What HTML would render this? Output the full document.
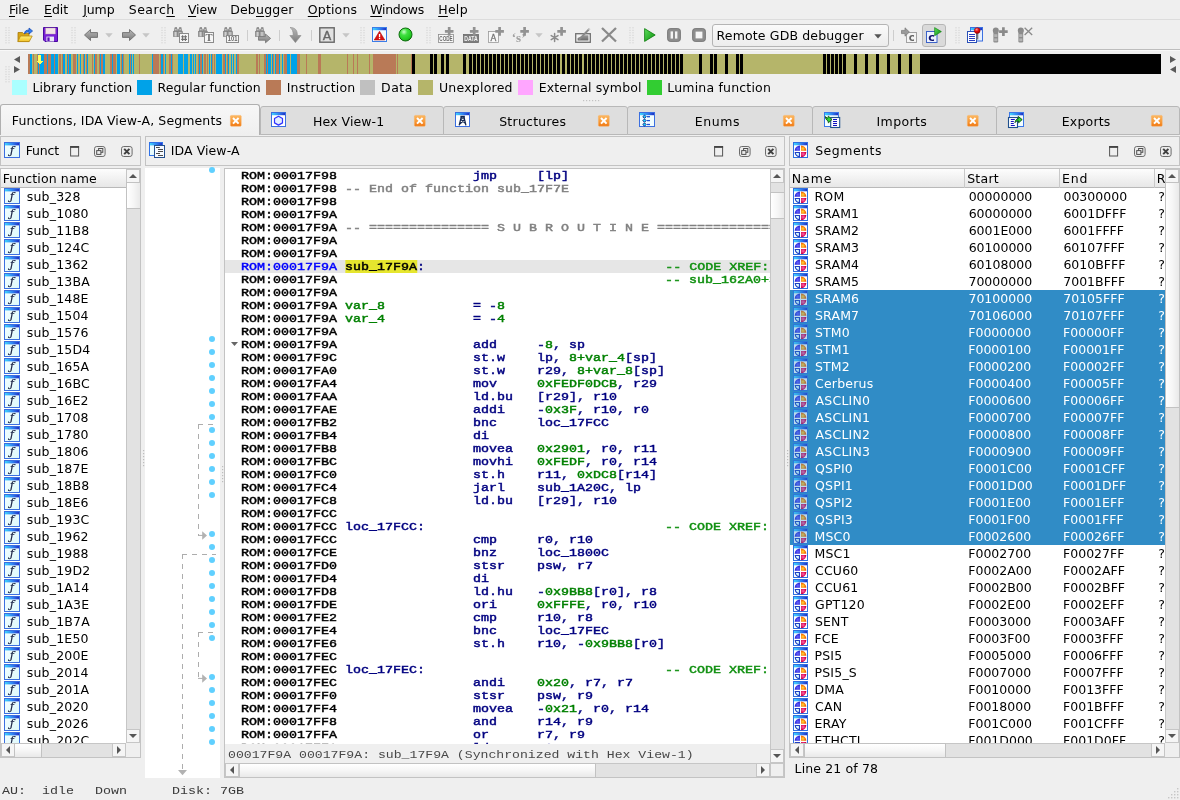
<!DOCTYPE html><html><head><meta charset="utf-8"><title>IDA</title><style>
*{box-sizing:border-box;margin:0;padding:0}
html,body{width:1180px;height:800px;overflow:hidden;background:#efefef}
body{position:relative;font-family:"DejaVu Sans","Liberation Sans",sans-serif;font-size:12.5px;color:#000}
.a{position:absolute}
svg{overflow:visible}
.t{position:absolute;white-space:pre;line-height:16px;height:16px}
.m{font-family:"Liberation Mono","DejaVu Sans Mono",monospace}
u{text-decoration:underline;text-underline-offset:1.5px;text-decoration-thickness:1px}
.code{position:absolute;left:225px;top:169px;width:545px;height:576px;background:#fff;overflow:hidden}
.cs{position:absolute;left:16px;top:-0.5px;width:600px;height:600px;transform-origin:0 0;transform:scaleX(1.15942)}
.ln{position:absolute;left:0;height:13px;line-height:13px;white-space:pre;font-family:"Liberation Mono","DejaVu Sans Mono",monospace;font-weight:normal;-webkit-text-stroke:0.45px currentColor;font-size:11.5px;color:#000}
.n{color:#000080}.g{color:#008000}.c{color:#808080}.x{color:#109010}.b{color:#0000ff}
.row{position:absolute;left:0;height:17px;line-height:17px;white-space:pre}
.sel{background:#308cc6}
.hdr{position:absolute;background:linear-gradient(#fdfdfd,#f3f3f3 45%,#e7e7e7);border-bottom:1px solid #b9b9b9}
.sb{position:absolute;background:#e2e2e2}
.sbb{position:absolute;background:#f5f5f5;border:1px solid #c6c6c6}
.thv{position:absolute;background:linear-gradient(90deg,#fff,#f6f6f6 50%,#e9e9e9);border:1px solid #c2c2c2;border-right:none}
.thh{position:absolute;background:linear-gradient(#fff,#f6f6f6 50%,#e9e9e9);border:1px solid #c2c2c2;border-bottom:none}
.box{position:absolute;border:1px solid #c3c3c3}
</style></head><body>
<svg width="0" height="0" style="position:absolute"><defs>
<linearGradient id="gGrey" x1="0" y1="0" x2="0" y2="1"><stop offset="0" stop-color="#9a9a9a"/><stop offset="1" stop-color="#6a6a6a"/></linearGradient>
<linearGradient id="gGreyL" x1="0" y1="0" x2="0" y2="1"><stop offset="0" stop-color="#b8b8b8"/><stop offset="1" stop-color="#7c7c7c"/></linearGradient>
<linearGradient id="gOr" x1="0" y1="0" x2="0" y2="1"><stop offset="0" stop-color="#fcb862"/><stop offset="0.55" stop-color="#f89a38"/><stop offset="1" stop-color="#f07610"/></linearGradient>
<linearGradient id="gBlueBar" x1="0" y1="0" x2="1" y2="0"><stop offset="0" stop-color="#40d4ff"/><stop offset="0.55" stop-color="#2f80f0"/><stop offset="1" stop-color="#2030c4"/></linearGradient>
<linearGradient id="gCy" x1="0" y1="0" x2="1" y2="1"><stop offset="0" stop-color="#f4feff"/><stop offset="1" stop-color="#dcf9fb"/></linearGradient>
<linearGradient id="gFold" x1="0" y1="0" x2="0" y2="1"><stop offset="0" stop-color="#fff07a"/><stop offset="1" stop-color="#f2c228"/></linearGradient>
<radialGradient id="gBall" cx="0.38" cy="0.3" r="0.75"><stop offset="0" stop-color="#c8ffc8"/><stop offset="0.35" stop-color="#40e040"/><stop offset="0.8" stop-color="#20c820"/><stop offset="1" stop-color="#109010"/></radialGradient>
<radialGradient id="gRed" cx="0.4" cy="0.3" r="0.7"><stop offset="0" stop-color="#ff9a9a"/><stop offset="0.5" stop-color="#e81010"/><stop offset="1" stop-color="#a00000"/></radialGradient>
<linearGradient id="gPlay" x1="0" y1="0" x2="1" y2="1"><stop offset="0" stop-color="#5ee05e"/><stop offset="1" stop-color="#0a8c0a"/></linearGradient>
<radialGradient id="gqB" cx="0.6" cy="0.6" r="0.7"><stop offset="0" stop-color="#6a62ff"/><stop offset="1" stop-color="#1414c8"/></radialGradient>
<radialGradient id="gqO" cx="0.35" cy="0.6" r="0.7"><stop offset="0" stop-color="#ffdc40"/><stop offset="0.6" stop-color="#f87800"/><stop offset="1" stop-color="#e85000"/></radialGradient>
<radialGradient id="gqR" cx="0.4" cy="0.4" r="0.7"><stop offset="0" stop-color="#f66aa8"/><stop offset="0.7" stop-color="#d80050"/><stop offset="1" stop-color="#b00030"/></radialGradient>
<linearGradient id="gTube" x1="0" y1="0" x2="1" y2="0"><stop offset="0" stop-color="#8a8a8a"/><stop offset="0.45" stop-color="#cfcfcf"/><stop offset="1" stop-color="#8e8e8e"/></linearGradient>
<linearGradient id="gHdr" x1="0" y1="0" x2="0" y2="1"><stop offset="0" stop-color="#fcfcfc"/><stop offset="1" stop-color="#e6e6e6"/></linearGradient>
</defs></svg>
<div id="root" style="position:absolute;left:0;top:0;width:1180px;height:800px;will-change:transform">
<div class="a" style="left:0;top:19px;width:1180px;height:1px;background:#dcdcdc"></div>
<div class="t" style="left:8.97px;top:1.67px;letter-spacing:-0.211px;"><u>F</u>ile</div>
<div class="t" style="left:44.07px;top:1.67px;letter-spacing:-0.027px;"><u>E</u>dit</div>
<div class="t" style="left:83.25px;top:1.67px;letter-spacing:-0.128px;"><u>J</u>ump</div>
<div class="t" style="left:128.68px;top:1.67px;letter-spacing:0.533px;">Searc<u>h</u></div>
<div class="t" style="left:188.00px;top:1.67px;letter-spacing:-0.172px;"><u>V</u>iew</div>
<div class="t" style="left:230.17px;top:1.67px;letter-spacing:0.194px;">Deb<u>u</u>gger</div>
<div class="t" style="left:307.80px;top:1.67px;letter-spacing:0.164px;"><u>O</u>ptions</div>
<div class="t" style="left:370.28px;top:1.67px;letter-spacing:-0.308px;"><u>W</u>indows</div>
<div class="t" style="left:438.17px;top:1.67px;letter-spacing:0.304px;"><u>H</u>elp</div>
<div class="a" style="left:0;top:49px;width:1180px;height:1px;background:#bdbdbd"></div>
<div class="a" style="left:0;top:50px;width:1180px;height:1px;background:#f8f8f8"></div>
<svg class="a" style="left:4.5px;top:27px" width="5" height="17" viewBox="0 0 5 17"><rect x="0.5" y="0.3" width="1" height="1" fill="#cbcbcb"/><rect x="0.5" y="2.8" width="1" height="1" fill="#cbcbcb"/><rect x="0.5" y="5.3" width="1" height="1" fill="#cbcbcb"/><rect x="0.5" y="7.8" width="1" height="1" fill="#cbcbcb"/><rect x="0.5" y="10.3" width="1" height="1" fill="#cbcbcb"/><rect x="0.5" y="12.8" width="1" height="1" fill="#cbcbcb"/><rect x="0.5" y="15.3" width="1" height="1" fill="#cbcbcb"/><rect x="3.5" y="0.3" width="1" height="1" fill="#cbcbcb"/><rect x="3.5" y="2.8" width="1" height="1" fill="#cbcbcb"/><rect x="3.5" y="5.3" width="1" height="1" fill="#cbcbcb"/><rect x="3.5" y="7.8" width="1" height="1" fill="#cbcbcb"/><rect x="3.5" y="10.3" width="1" height="1" fill="#cbcbcb"/><rect x="3.5" y="12.8" width="1" height="1" fill="#cbcbcb"/><rect x="3.5" y="15.3" width="1" height="1" fill="#cbcbcb"/></svg>
<svg class="a" style="left:17px;top:27px" width="16" height="16" viewBox="0 0 16 16"><path d="M1 5.5 L1 14.5 L12 14.5 L12 6.5 L6.5 6.5 L5.5 5.5 Z" fill="#d9a514" stroke="#a67808" stroke-width="0.8"/><path d="M3.5 9 L15.2 9 L12.2 14.6 L0.8 14.6 Z" fill="url(#gFold)" stroke="#b88a10" stroke-width="0.8"/><path d="M7.5 6.8 C7.5 3.8 9.5 3 12 3 L12 1 L15.6 4 L12 7 L12 5 C10.2 5 9 5.4 7.5 6.8 Z" fill="#2f7df0" stroke="#1546b0" stroke-width="0.7"/></svg>
<svg class="a" style="left:43px;top:27px" width="15" height="15" viewBox="0 0 15 15"><path d="M0.5 0.5 H14.5 V14.5 H2 L0.5 13 Z" fill="#7a22d6" stroke="#4a0aa0" stroke-width="1"/><rect x="2.6" y="1" width="9.8" height="6" fill="#f3e3e6" stroke="#b9a" stroke-width="0.4"/><rect x="3.4" y="9.6" width="7.6" height="4.9" fill="#e8e8f4"/><rect x="4.4" y="10.4" width="2.2" height="3.6" fill="#5a10b8"/></svg>
<svg class="a" style="left:71px;top:27px" width="5" height="17" viewBox="0 0 5 17"><rect x="0.5" y="0.3" width="1" height="1" fill="#cbcbcb"/><rect x="0.5" y="2.8" width="1" height="1" fill="#cbcbcb"/><rect x="0.5" y="5.3" width="1" height="1" fill="#cbcbcb"/><rect x="0.5" y="7.8" width="1" height="1" fill="#cbcbcb"/><rect x="0.5" y="10.3" width="1" height="1" fill="#cbcbcb"/><rect x="0.5" y="12.8" width="1" height="1" fill="#cbcbcb"/><rect x="0.5" y="15.3" width="1" height="1" fill="#cbcbcb"/><rect x="3.5" y="0.3" width="1" height="1" fill="#cbcbcb"/><rect x="3.5" y="2.8" width="1" height="1" fill="#cbcbcb"/><rect x="3.5" y="5.3" width="1" height="1" fill="#cbcbcb"/><rect x="3.5" y="7.8" width="1" height="1" fill="#cbcbcb"/><rect x="3.5" y="10.3" width="1" height="1" fill="#cbcbcb"/><rect x="3.5" y="12.8" width="1" height="1" fill="#cbcbcb"/><rect x="3.5" y="15.3" width="1" height="1" fill="#cbcbcb"/></svg>
<svg class="a" style="left:83.5px;top:29px" width="14" height="12" viewBox="0 0 14 12"><path d="M0.5 6 L6.5 0.5 L6.5 3.6 L13.5 3.6 L13.5 8.4 L6.5 8.4 L6.5 11.5 Z" fill="url(#gGreyL)" stroke="#6e6e6e" stroke-width="0.9"/></svg>
<svg class="a" style="left:105px;top:33px" width="8" height="5" viewBox="0 0 8 5"><path d="M0.3 0.3 L7.7 0.3 L4 4.6 Z" fill="#c6c6c6"/></svg>
<svg class="a" style="left:121.5px;top:29px" width="14" height="12" viewBox="0 0 14 12"><path d="M13.5 6 L7.5 0.5 L7.5 3.6 L0.5 3.6 L0.5 8.4 L7.5 8.4 L7.5 11.5 Z" fill="url(#gGreyL)" stroke="#6e6e6e" stroke-width="0.9"/></svg>
<svg class="a" style="left:142px;top:33px" width="8" height="5" viewBox="0 0 8 5"><path d="M0.3 0.3 L7.7 0.3 L4 4.6 Z" fill="#c6c6c6"/></svg>
<svg class="a" style="left:161px;top:27px" width="5" height="17" viewBox="0 0 5 17"><rect x="0.5" y="0.3" width="1" height="1" fill="#cbcbcb"/><rect x="0.5" y="2.8" width="1" height="1" fill="#cbcbcb"/><rect x="0.5" y="5.3" width="1" height="1" fill="#cbcbcb"/><rect x="0.5" y="7.8" width="1" height="1" fill="#cbcbcb"/><rect x="0.5" y="10.3" width="1" height="1" fill="#cbcbcb"/><rect x="0.5" y="12.8" width="1" height="1" fill="#cbcbcb"/><rect x="0.5" y="15.3" width="1" height="1" fill="#cbcbcb"/><rect x="3.5" y="0.3" width="1" height="1" fill="#cbcbcb"/><rect x="3.5" y="2.8" width="1" height="1" fill="#cbcbcb"/><rect x="3.5" y="5.3" width="1" height="1" fill="#cbcbcb"/><rect x="3.5" y="7.8" width="1" height="1" fill="#cbcbcb"/><rect x="3.5" y="10.3" width="1" height="1" fill="#cbcbcb"/><rect x="3.5" y="12.8" width="1" height="1" fill="#cbcbcb"/><rect x="3.5" y="15.3" width="1" height="1" fill="#cbcbcb"/></svg>
<svg class="a" style="left:173px;top:27px" width="16" height="16" viewBox="0 0 16 16"><rect x="1.7" y="0.3" width="2.3" height="1.6" fill="#767676"/><rect x="1.4" y="1.8" width="2.9" height="2" fill="url(#gTube)" stroke="#8a8a8a" stroke-width="0.4"/><rect x="0.9" y="3.7" width="3.9" height="1.1" fill="#6e6e6e"/><rect x="0.3" y="4.7" width="4.9" height="5" fill="url(#gTube)" stroke="#7c7c7c" stroke-width="0.5"/><rect x="6.1000000000000005" y="0.3" width="2.3" height="1.6" fill="#767676"/><rect x="5.800000000000001" y="1.8" width="2.9" height="2" fill="url(#gTube)" stroke="#8a8a8a" stroke-width="0.4"/><rect x="5.300000000000001" y="3.7" width="3.9" height="1.1" fill="#6e6e6e"/><rect x="4.7" y="4.7" width="4.9" height="5" fill="url(#gTube)" stroke="#7c7c7c" stroke-width="0.5"/><rect x="4.6" y="2.4" width="1.6" height="2" fill="#8a8a8a"/><rect x="6.5" y="6.5" width="9" height="9" fill="#f6f6f6" stroke="#8a8a8a"/><path d="M9.6 8.2V14 M12.4 8.2V14 M8.2 9.8H14 M8.2 12.4H14" stroke="#6e6e6e" stroke-width="1.1"/></svg>
<svg class="a" style="left:198px;top:27px" width="16" height="16" viewBox="0 0 16 16"><rect x="1.7" y="0.3" width="2.3" height="1.6" fill="#767676"/><rect x="1.4" y="1.8" width="2.9" height="2" fill="url(#gTube)" stroke="#8a8a8a" stroke-width="0.4"/><rect x="0.9" y="3.7" width="3.9" height="1.1" fill="#6e6e6e"/><rect x="0.3" y="4.7" width="4.9" height="5" fill="url(#gTube)" stroke="#7c7c7c" stroke-width="0.5"/><rect x="6.1000000000000005" y="0.3" width="2.3" height="1.6" fill="#767676"/><rect x="5.800000000000001" y="1.8" width="2.9" height="2" fill="url(#gTube)" stroke="#8a8a8a" stroke-width="0.4"/><rect x="5.300000000000001" y="3.7" width="3.9" height="1.1" fill="#6e6e6e"/><rect x="4.7" y="4.7" width="4.9" height="5" fill="url(#gTube)" stroke="#7c7c7c" stroke-width="0.5"/><rect x="4.6" y="2.4" width="1.6" height="2" fill="#8a8a8a"/><rect x="6.5" y="5.5" width="9" height="10" fill="#f6f6f6" stroke="#8a8a8a"/><text x="11" y="14.4" font-family="Liberation Serif,serif" font-weight="bold" font-size="10.5" text-anchor="middle" fill="#6e6e6e">T</text></svg>
<svg class="a" style="left:223px;top:27px" width="16" height="16" viewBox="0 0 16 16"><rect x="1.7" y="0.3" width="2.3" height="1.6" fill="#767676"/><rect x="1.4" y="1.8" width="2.9" height="2" fill="url(#gTube)" stroke="#8a8a8a" stroke-width="0.4"/><rect x="0.9" y="3.7" width="3.9" height="1.1" fill="#6e6e6e"/><rect x="0.3" y="4.7" width="4.9" height="5" fill="url(#gTube)" stroke="#7c7c7c" stroke-width="0.5"/><rect x="6.1000000000000005" y="0.3" width="2.3" height="1.6" fill="#767676"/><rect x="5.800000000000001" y="1.8" width="2.9" height="2" fill="url(#gTube)" stroke="#8a8a8a" stroke-width="0.4"/><rect x="5.300000000000001" y="3.7" width="3.9" height="1.1" fill="#6e6e6e"/><rect x="4.7" y="4.7" width="4.9" height="5" fill="url(#gTube)" stroke="#7c7c7c" stroke-width="0.5"/><rect x="4.6" y="2.4" width="1.6" height="2" fill="#8a8a8a"/><rect x="3.5" y="8.5" width="12" height="7" fill="#f6f6f6" stroke="#8a8a8a"/><text x="9.6" y="14.4" font-family="Liberation Sans,DejaVu Sans,sans-serif" font-weight="bold" font-size="7" text-anchor="middle" fill="#666" textLength="9.6" lengthAdjust="spacingAndGlyphs">101</text></svg>
<div class="a" style="left:247px;top:30px;width:1px;height:11px;background:#cdcdcd"></div>
<svg class="a" style="left:255px;top:27px" width="16" height="16" viewBox="0 0 16 16"><rect x="1.7" y="0.3" width="2.3" height="1.6" fill="#767676"/><rect x="1.4" y="1.8" width="2.9" height="2" fill="url(#gTube)" stroke="#8a8a8a" stroke-width="0.4"/><rect x="0.9" y="3.7" width="3.9" height="1.1" fill="#6e6e6e"/><rect x="0.3" y="4.7" width="4.9" height="5" fill="url(#gTube)" stroke="#7c7c7c" stroke-width="0.5"/><rect x="6.1000000000000005" y="0.3" width="2.3" height="1.6" fill="#767676"/><rect x="5.800000000000001" y="1.8" width="2.9" height="2" fill="url(#gTube)" stroke="#8a8a8a" stroke-width="0.4"/><rect x="5.300000000000001" y="3.7" width="3.9" height="1.1" fill="#6e6e6e"/><rect x="4.7" y="4.7" width="4.9" height="5" fill="url(#gTube)" stroke="#7c7c7c" stroke-width="0.5"/><rect x="4.6" y="2.4" width="1.6" height="2" fill="#8a8a8a"/><path d="M3.5 9.6 H10.5 V7 L15.6 11.4 L10.5 15.8 V13.2 H3.5 Z" fill="url(#gGreyL)" stroke="#727272" stroke-width="0.8"/></svg>
<div class="a" style="left:279px;top:30px;width:1px;height:11px;background:#cdcdcd"></div>
<svg class="a" style="left:288.5px;top:27px" width="13" height="16" viewBox="0 0 13 16"><path d="M1 0.5 C6 0.5 8.4 3 8.4 8.5 L12 8.5 L6.4 15.6 L0.8 8.5 L4.2 8.5 C4.2 4.5 3.5 2 1 0.5 Z" fill="url(#gGreyL)" stroke="#8a8a8a" stroke-width="0.6"/></svg>
<div class="a" style="left:311px;top:30px;width:1px;height:11px;background:#cdcdcd"></div>
<svg class="a" style="left:319px;top:27px" width="16" height="16" viewBox="0 0 16 16"><rect x="0.8" y="0.8" width="14.4" height="14.4" fill="#e2e2e2" stroke="#666" stroke-width="1.4"/><text x="8" y="13" font-family="DejaVu Sans,Liberation Sans,sans-serif" font-size="12.5" text-anchor="middle" fill="#666" stroke="#666" stroke-width="0.35">A</text></svg>
<svg class="a" style="left:341.5px;top:33px" width="8" height="5" viewBox="0 0 8 5"><path d="M0.3 0.3 L7.7 0.3 L4 4.6 Z" fill="#c6c6c6"/></svg>
<svg class="a" style="left:360px;top:27px" width="5" height="17" viewBox="0 0 5 17"><rect x="0.5" y="0.3" width="1" height="1" fill="#cbcbcb"/><rect x="0.5" y="2.8" width="1" height="1" fill="#cbcbcb"/><rect x="0.5" y="5.3" width="1" height="1" fill="#cbcbcb"/><rect x="0.5" y="7.8" width="1" height="1" fill="#cbcbcb"/><rect x="0.5" y="10.3" width="1" height="1" fill="#cbcbcb"/><rect x="0.5" y="12.8" width="1" height="1" fill="#cbcbcb"/><rect x="0.5" y="15.3" width="1" height="1" fill="#cbcbcb"/><rect x="3.5" y="0.3" width="1" height="1" fill="#cbcbcb"/><rect x="3.5" y="2.8" width="1" height="1" fill="#cbcbcb"/><rect x="3.5" y="5.3" width="1" height="1" fill="#cbcbcb"/><rect x="3.5" y="7.8" width="1" height="1" fill="#cbcbcb"/><rect x="3.5" y="10.3" width="1" height="1" fill="#cbcbcb"/><rect x="3.5" y="12.8" width="1" height="1" fill="#cbcbcb"/><rect x="3.5" y="15.3" width="1" height="1" fill="#cbcbcb"/></svg>
<svg class="a" style="left:372px;top:27px" width="15" height="15" viewBox="0 0 15 15"><rect x="0.5" y="0.5" width="14" height="14" fill="#f4fbff" stroke="#3b7de8"/><rect x="1" y="1" width="13" height="2.2" fill="url(#gBlueBar)"/><path d="M7.5 4.2 L12.8 13 L2.2 13 Z" fill="#d81414" stroke="#a00" stroke-width="0.5"/><rect x="6.9" y="7" width="1.3" height="3.2" fill="#fff"/><rect x="6.9" y="10.9" width="1.3" height="1.2" fill="#fff"/></svg>
<svg class="a" style="left:397.5px;top:27.3px" width="15" height="15" viewBox="0 0 15 15"><circle cx="7.5" cy="7.5" r="6.5" fill="url(#gBall)" stroke="#0a6a0a" stroke-width="1"/></svg>
<svg class="a" style="left:426px;top:27px" width="5" height="17" viewBox="0 0 5 17"><rect x="0.5" y="0.3" width="1" height="1" fill="#cbcbcb"/><rect x="0.5" y="2.8" width="1" height="1" fill="#cbcbcb"/><rect x="0.5" y="5.3" width="1" height="1" fill="#cbcbcb"/><rect x="0.5" y="7.8" width="1" height="1" fill="#cbcbcb"/><rect x="0.5" y="10.3" width="1" height="1" fill="#cbcbcb"/><rect x="0.5" y="12.8" width="1" height="1" fill="#cbcbcb"/><rect x="0.5" y="15.3" width="1" height="1" fill="#cbcbcb"/><rect x="3.5" y="0.3" width="1" height="1" fill="#cbcbcb"/><rect x="3.5" y="2.8" width="1" height="1" fill="#cbcbcb"/><rect x="3.5" y="5.3" width="1" height="1" fill="#cbcbcb"/><rect x="3.5" y="7.8" width="1" height="1" fill="#cbcbcb"/><rect x="3.5" y="10.3" width="1" height="1" fill="#cbcbcb"/><rect x="3.5" y="12.8" width="1" height="1" fill="#cbcbcb"/><rect x="3.5" y="15.3" width="1" height="1" fill="#cbcbcb"/></svg>
<svg class="a" style="left:438px;top:27px" width="16" height="16" viewBox="0 0 16 16"><rect x="0.5" y="7.5" width="15" height="8" fill="#f8f8f8" stroke="#8c8c8c" stroke-width="0.8"/><text x="8" y="14.2" font-family="Liberation Sans,sans-serif" font-weight="bold" font-size="6.6" text-anchor="middle" fill="#6a6a6a" textLength="13.4" lengthAdjust="spacingAndGlyphs">CODE</text><path d="M6.8999999999999995 4.4 H15.5 M11.2 0.10000000000000053 V8.7" stroke="#929292" stroke-width="2.7"/></svg>
<svg class="a" style="left:463px;top:27px" width="16" height="16" viewBox="0 0 16 16"><rect x="0.5" y="7.5" width="15" height="8" fill="#7c7c7c" stroke="#6a6a6a" stroke-width="0.8"/><text x="8" y="14.2" font-family="Liberation Sans,sans-serif" font-weight="bold" font-size="6.6" text-anchor="middle" fill="#f4f4f4" textLength="13.4" lengthAdjust="spacingAndGlyphs">DATA</text><path d="M6.8999999999999995 4.4 H15.5 M11.2 0.10000000000000053 V8.7" stroke="#929292" stroke-width="2.7"/></svg>
<svg class="a" style="left:488px;top:27px" width="16" height="16" viewBox="0 0 16 16"><rect x="0.5" y="4.5" width="10" height="11" fill="#f8f8f8" stroke="#9a9a9a" stroke-width="0.8"/><text x="5.5" y="14" font-family="DejaVu Sans,sans-serif" font-size="8.5" text-anchor="middle" fill="#777" stroke="#777" stroke-width="0.3">A</text><path d="M7.3 4.4 H15.899999999999999 M11.6 0.10000000000000053 V8.7" stroke="#929292" stroke-width="2.7"/></svg>
<svg class="a" style="left:513px;top:27px" width="16" height="16" viewBox="0 0 16 16"><text x="5.6" y="15" font-family="Liberation Serif,serif" font-weight="bold" font-size="13" text-anchor="middle" fill="#a0a0a0">‘s’</text><path d="M7.3 4.4 H15.899999999999999 M11.6 0.10000000000000053 V8.7" stroke="#929292" stroke-width="2.7"/></svg>
<svg class="a" style="left:535px;top:33px" width="8" height="5" viewBox="0 0 8 5"><path d="M0.3 0.3 L7.7 0.3 L4 4.6 Z" fill="#c6c6c6"/></svg>
<svg class="a" style="left:550px;top:27px" width="16" height="16" viewBox="0 0 16 16"><path d="M4.6 6.6 V14.6 M1.2 8.6 L8 12.6 M8 8.6 L1.2 12.6" stroke="#8a8a8a" stroke-width="1.5" stroke-linecap="round"/><path d="M7.3 4.4 H15.899999999999999 M11.6 0.10000000000000053 V8.7" stroke="#929292" stroke-width="2.7"/></svg>
<svg class="a" style="left:575px;top:27px" width="16" height="16" viewBox="0 0 16 16"><rect x="0.7" y="6.7" width="14.6" height="8.6" fill="#f2f2f2" stroke="#707070" stroke-width="1.3"/><path d="M2.6 13.4 L2.6 11 L9 8.2 L13.4 8.2 L13.4 13.4 Z" fill="url(#gGrey)"/><path d="M4 12.6 L14.6 1.6" stroke="#8a8a8a" stroke-width="2"/><path d="M13.6 2.6 L14.8 1.4" stroke="#d8d8d8" stroke-width="1.6"/></svg>
<svg class="a" style="left:600.5px;top:27px" width="16" height="16" viewBox="0 0 16 16"><path d="M1 1 L15 14.5 M15 1 L1 14.5" stroke="#8a8a8a" stroke-width="2.3"/></svg>
<svg class="a" style="left:629px;top:27px" width="5" height="17" viewBox="0 0 5 17"><rect x="0.5" y="0.3" width="1" height="1" fill="#cbcbcb"/><rect x="0.5" y="2.8" width="1" height="1" fill="#cbcbcb"/><rect x="0.5" y="5.3" width="1" height="1" fill="#cbcbcb"/><rect x="0.5" y="7.8" width="1" height="1" fill="#cbcbcb"/><rect x="0.5" y="10.3" width="1" height="1" fill="#cbcbcb"/><rect x="0.5" y="12.8" width="1" height="1" fill="#cbcbcb"/><rect x="0.5" y="15.3" width="1" height="1" fill="#cbcbcb"/><rect x="3.5" y="0.3" width="1" height="1" fill="#cbcbcb"/><rect x="3.5" y="2.8" width="1" height="1" fill="#cbcbcb"/><rect x="3.5" y="5.3" width="1" height="1" fill="#cbcbcb"/><rect x="3.5" y="7.8" width="1" height="1" fill="#cbcbcb"/><rect x="3.5" y="10.3" width="1" height="1" fill="#cbcbcb"/><rect x="3.5" y="12.8" width="1" height="1" fill="#cbcbcb"/><rect x="3.5" y="15.3" width="1" height="1" fill="#cbcbcb"/></svg>
<svg class="a" style="left:643.5px;top:28.3px" width="12" height="14" viewBox="0 0 12 14"><path d="M0.6 0.6 L11.2 7 L0.6 13.4 Z" fill="url(#gPlay)" stroke="#0a7a0a" stroke-width="0.8"/></svg>
<svg class="a" style="left:667px;top:28px" width="14" height="14" viewBox="0 0 14 14"><rect x="0.6" y="0.6" width="12.8" height="12.8" rx="2.6" fill="#8e8e8e" stroke="#727272" stroke-width="0.9"/><rect x="3.6" y="3.4" width="2.4" height="7.2" fill="#f4f4f4"/><rect x="8" y="3.4" width="2.4" height="7.2" fill="#f4f4f4"/></svg>
<svg class="a" style="left:692px;top:28px" width="14" height="14" viewBox="0 0 14 14"><rect x="0.6" y="0.6" width="12.8" height="12.8" rx="2.6" fill="#8e8e8e" stroke="#727272" stroke-width="0.9"/><rect x="3.6" y="3.6" width="6.8" height="6.8" fill="#f6f6f6"/></svg>
<div class="a" style="left:712px;top:24px;width:177px;height:23px;border:1px solid #b4b4b4;border-radius:3px;background:linear-gradient(#fafafa,#ececec)"></div>
<div class="t" style="left:716.57px;top:27.67px;letter-spacing:0.151px;">Remote GDB debugger</div>
<svg class="a" style="left:873.5px;top:34px" width="8" height="5" viewBox="0 0 8 5"><path d="M0.3 0.3 L7.7 0.3 L4 4.6 Z" fill="#555"/></svg>
<div class="a" style="left:893px;top:30px;width:1px;height:11px;background:#cdcdcd"></div>
<svg class="a" style="left:901px;top:27px" width="16" height="16" viewBox="0 0 16 16"><rect x="5.5" y="5.5" width="10" height="10" fill="#f4f4f4" stroke="#9a9a9a" stroke-width="0.9"/><text x="10.6" y="14.2" font-family="DejaVu Sans,sans-serif" font-weight="bold" font-size="10" text-anchor="middle" fill="#666">c</text><path d="M0.5 3.4 H4 V0.8 L8.4 5 L4 9.2 V6.6 H0.5 Z" fill="#9a9a9a" stroke="#777" stroke-width="0.7"/></svg>
<div class="a" style="left:922px;top:24px;width:24px;height:23px;border:1px solid #b6b6b6;border-radius:3px;background:#dadada"></div>
<svg class="a" style="left:926px;top:27px" width="16" height="16" viewBox="0 0 16 16"><rect x="0.5" y="4.5" width="10.5" height="11" fill="#eef3ff" stroke="#3b62c8" stroke-width="1"/><text x="5.6" y="14" font-family="DejaVu Sans,sans-serif" font-weight="bold" font-size="11" text-anchor="middle" fill="#10106a">c</text><path d="M8.6 0.6 L15.4 4.6 L8.6 8.8 Z" fill="url(#gPlay)" stroke="#0a7a0a" stroke-width="0.6"/></svg>
<svg class="a" style="left:955px;top:27px" width="5" height="17" viewBox="0 0 5 17"><rect x="0.5" y="0.3" width="1" height="1" fill="#cbcbcb"/><rect x="0.5" y="2.8" width="1" height="1" fill="#cbcbcb"/><rect x="0.5" y="5.3" width="1" height="1" fill="#cbcbcb"/><rect x="0.5" y="7.8" width="1" height="1" fill="#cbcbcb"/><rect x="0.5" y="10.3" width="1" height="1" fill="#cbcbcb"/><rect x="0.5" y="12.8" width="1" height="1" fill="#cbcbcb"/><rect x="0.5" y="15.3" width="1" height="1" fill="#cbcbcb"/><rect x="3.5" y="0.3" width="1" height="1" fill="#cbcbcb"/><rect x="3.5" y="2.8" width="1" height="1" fill="#cbcbcb"/><rect x="3.5" y="5.3" width="1" height="1" fill="#cbcbcb"/><rect x="3.5" y="7.8" width="1" height="1" fill="#cbcbcb"/><rect x="3.5" y="10.3" width="1" height="1" fill="#cbcbcb"/><rect x="3.5" y="12.8" width="1" height="1" fill="#cbcbcb"/><rect x="3.5" y="15.3" width="1" height="1" fill="#cbcbcb"/></svg>
<svg class="a" style="left:967px;top:27px" width="16" height="16" viewBox="0 0 16 16"><rect x="3.5" y="0.5" width="12" height="13.5" fill="#e6f0ff" stroke="#3b6fe0"/><rect x="4" y="1" width="11" height="2.2" fill="url(#gBlueBar)"/><rect x="0.5" y="4.5" width="9" height="11" fill="#fff" stroke="#2a50b8"/><path d="M2 7.5h6M2 9.5h6M2 11.5h6M2 13.5h6" stroke="#2a3ec0" stroke-width="1"/><rect x="9.3" y="6" width="2" height="6.5" fill="#777"/><circle cx="10.2" cy="3.6" r="2.9" fill="url(#gRed)" stroke="#900" stroke-width="0.5"/></svg>
<svg class="a" style="left:992px;top:27px" width="16" height="16" viewBox="0 0 16 16"><circle cx="3.8" cy="3.4" r="3" fill="#8a8a8a"/><rect x="1.4" y="3.4" width="4.8" height="12" rx="1.2" fill="#8c8c8c"/><rect x="2.2" y="7.2" width="3.2" height="2.8" fill="#b4b4b4"/><rect x="2.2" y="11.4" width="3.2" height="2.8" fill="#b4b4b4"/><path d="M7.1000000000000005 4.6 H15.7 M11.4 0.2999999999999998 V8.899999999999999" stroke="#8a8a8a" stroke-width="2.7"/></svg>
<svg class="a" style="left:1017px;top:27px" width="16" height="16" viewBox="0 0 16 16"><circle cx="3.8" cy="3.4" r="3" fill="#8a8a8a"/><rect x="1.4" y="3.4" width="4.8" height="12" rx="1.2" fill="#8c8c8c"/><rect x="2.2" y="7.2" width="3.2" height="2.8" fill="#b4b4b4"/><rect x="2.2" y="11.4" width="3.2" height="2.8" fill="#b4b4b4"/><path d="M7.6 0.8 L15.2 8 M15.2 0.8 L7.6 8" stroke="#8a8a8a" stroke-width="1.3"/></svg>
<svg class="a" style="left:4.5px;top:66px" width="5" height="15" viewBox="0 0 5 15"><rect x="0.5" y="0.3" width="1" height="1" fill="#cbcbcb"/><rect x="0.5" y="2.8" width="1" height="1" fill="#cbcbcb"/><rect x="0.5" y="5.3" width="1" height="1" fill="#cbcbcb"/><rect x="0.5" y="7.8" width="1" height="1" fill="#cbcbcb"/><rect x="0.5" y="10.3" width="1" height="1" fill="#cbcbcb"/><rect x="0.5" y="12.8" width="1" height="1" fill="#cbcbcb"/><rect x="0.5" y="15.3" width="1" height="1" fill="#cbcbcb"/><rect x="3.5" y="0.3" width="1" height="1" fill="#cbcbcb"/><rect x="3.5" y="2.8" width="1" height="1" fill="#cbcbcb"/><rect x="3.5" y="5.3" width="1" height="1" fill="#cbcbcb"/><rect x="3.5" y="7.8" width="1" height="1" fill="#cbcbcb"/><rect x="3.5" y="10.3" width="1" height="1" fill="#cbcbcb"/><rect x="3.5" y="12.8" width="1" height="1" fill="#cbcbcb"/><rect x="3.5" y="15.3" width="1" height="1" fill="#cbcbcb"/></svg>
<svg class="a" style="left:14px;top:56px" width="6" height="7" viewBox="0 0 6 7"><path d="M6 0 L6 7 L0 3.5 Z" fill="#5a5a5a"/></svg>
<svg class="a" style="left:14px;top:66px" width="6" height="7" viewBox="0 0 6 7"><path d="M0 0 L0 7 L6 3.5 Z" fill="#5a5a5a"/></svg>
<svg class="a" style="left:1170px;top:56px" width="6" height="7" viewBox="0 0 6 7"><path d="M0 0 L0 7 L6 3.5 Z" fill="#5a5a5a"/></svg>
<svg class="a" style="left:1170px;top:66px" width="6" height="7" viewBox="0 0 6 7"><path d="M6 0 L6 7 L0 3.5 Z" fill="#5a5a5a"/></svg>
<svg class="a" style="left:28px;top:54px" width="1133" height="20" viewBox="0 0 1133 20" shape-rendering="crispEdges"><rect x="0" y="0" width="1133" height="20" fill="#b5b56a"/><path d="M0 0h2v20h-2zM5 0h1v20h-1zM9 0h1v20h-1zM11 0h1v20h-1zM16 0h3v20h-3zM20 0h3v20h-3zM26 0h1v20h-1zM31 0h2v20h-2zM34 0h1v20h-1zM40 0h1v20h-1zM45 0h3v20h-3zM55 0h1v20h-1zM58 0h1v20h-1zM64 0h1v20h-1zM67 0h2v20h-2zM71 0h1v20h-1zM73 0h2v20h-2zM82 0h2v20h-2zM85 0h3v20h-3zM93 0h1v20h-1zM95 0h1v20h-1zM102 0h1v20h-1zM111 0h1v20h-1zM125 0h6v20h-6zM132 0h1v20h-1zM135 0h1v20h-1zM141 0h2v20h-2zM144 0h1v20h-1zM170 0h1v20h-1zM172 0h2v20h-2zM176 0h2v20h-2zM179 0h1v20h-1zM184 0h1v20h-1zM186 0h1v20h-1zM195 0h2v20h-2zM199 0h1v20h-1zM209 0h2v20h-2zM228 0h2v20h-2zM231 0h1v20h-1zM236 0h2v20h-2zM239 0h1v20h-1zM245 0h1v20h-1zM248 0h3v20h-3zM256 0h3v20h-3zM269 0h3v20h-3zM278 0h1v20h-1zM290 0h3v20h-3zM319 0h1v20h-1zM325 0h1v20h-1zM329 0h1v20h-1zM341 0h1v20h-1zM345 0h9v20h-9zM354 0h14v20h-14zM369 0h1v20h-1zM383 0h1v20h-1z" fill="#b97a57"/><path d="M2 0h2v20h-2zM10 0h1v20h-1zM12 0h4v20h-4zM19 0h1v20h-1zM23 0h3v20h-3zM27 0h3v20h-3zM35 0h2v20h-2zM39 0h1v20h-1zM41 0h2v20h-2zM49 0h1v20h-1zM52 0h1v20h-1zM56 0h1v20h-1zM59 0h1v20h-1zM66 0h1v20h-1zM72 0h1v20h-1zM75 0h2v20h-2zM84 0h1v20h-1zM89 0h3v20h-3zM94 0h1v20h-1zM101 0h1v20h-1zM103 0h1v20h-1zM105 0h1v20h-1zM124 0h1v20h-1zM133 0h2v20h-2zM137 0h1v20h-1zM143 0h1v20h-1zM150 0h5v20h-5zM156 0h4v20h-4zM162 0h2v20h-2zM165 0h1v20h-1zM167 0h1v20h-1zM171 0h1v20h-1zM174 0h1v20h-1zM181 0h1v20h-1zM183 0h1v20h-1zM188 0h6v20h-6zM197 0h1v20h-1zM200 0h1v20h-1zM203 0h1v20h-1zM205 0h1v20h-1zM208 0h1v20h-1zM238 0h1v20h-1zM240 0h3v20h-3zM244 0h1v20h-1zM247 0h1v20h-1zM251 0h1v20h-1zM254 0h1v20h-1zM259 0h3v20h-3zM263 0h6v20h-6z" fill="#00a2e8"/><path d="M384 0h3v20h-3zM402 0h3v20h-3zM406 0h3v20h-3zM413 0h3v20h-3zM418 0h3v20h-3zM435 0h3v20h-3zM441 0h3v20h-3zM445 0h3v20h-3zM449 0h3v20h-3zM453 0h3v20h-3zM457 0h3v20h-3zM461 0h3v20h-3zM465 0h3v20h-3zM469 0h3v20h-3zM473 0h3v20h-3zM477 0h3v20h-3zM481 0h3v20h-3zM485 0h3v20h-3zM489 0h3v20h-3zM493 0h3v20h-3zM497 0h3v20h-3zM501 0h3v20h-3zM505 0h3v20h-3zM509 0h3v20h-3zM513 0h3v20h-3zM517 0h3v20h-3zM521 0h3v20h-3zM525 0h3v20h-3zM529 0h3v20h-3zM534 0h3v20h-3zM539 0h3v20h-3zM543 0h3v20h-3zM547 0h3v20h-3zM551 0h3v20h-3zM556 0h3v20h-3zM560 0h3v20h-3zM564 0h3v20h-3zM568 0h3v20h-3zM572 0h3v20h-3zM576 0h3v20h-3zM580 0h3v20h-3zM584 0h3v20h-3zM588 0h2v20h-2zM590 0h1v20h-1zM592 0h3v20h-3zM596 0h3v20h-3zM600 0h3v20h-3zM604 0h3v20h-3zM608 0h3v20h-3zM612 0h3v20h-3zM616 0h3v20h-3zM620 0h3v20h-3zM624 0h3v20h-3zM628 0h3v20h-3zM632 0h3v20h-3zM636 0h3v20h-3zM640 0h3v20h-3zM644 0h3v20h-3zM648 0h3v20h-3zM652 0h3v20h-3zM671 0h3v20h-3zM682 0h3v20h-3zM686 0h3v20h-3zM697 0h3v20h-3zM708 0h3v20h-3zM712 0h3v20h-3zM795 0h3v20h-3zM799 0h3v20h-3zM803 0h3v20h-3zM807 0h3v20h-3zM811 0h3v20h-3zM815 0h3v20h-3zM826 0h3v20h-3zM837 0h3v20h-3zM848 0h3v20h-3zM859 0h3v20h-3zM870 0h3v20h-3zM881 0h3v20h-3zM892 0h52v20h-52zM944 0h189v20h-189z" fill="#000000"/><path d="M10 1h3v6h2l-3.5 3.5l-3.5 -3.5h2z" fill="#ffff5a"/></svg>
<div class="a" style="left:12px;top:80px;width:15px;height:15px;background:#aaffff"></div>
<div class="t" style="left:32.47px;top:79.67px;letter-spacing:0.056px;">Library function</div>
<div class="a" style="left:137px;top:80px;width:15px;height:15px;background:#00a2e8"></div>
<div class="t" style="left:157.57px;top:79.67px;letter-spacing:0.010px;">Regular function</div>
<div class="a" style="left:266px;top:80px;width:15px;height:15px;background:#b97a57"></div>
<div class="t" style="left:286.77px;top:79.67px;letter-spacing:0.149px;">Instruction</div>
<div class="a" style="left:360px;top:80px;width:15px;height:15px;background:#c0c0c0"></div>
<div class="t" style="left:380.97px;top:79.67px;letter-spacing:0.539px;">Data</div>
<div class="a" style="left:418px;top:80px;width:15px;height:15px;background:#b5b56a"></div>
<div class="t" style="left:438.91px;top:79.67px;letter-spacing:0.238px;">Unexplored</div>
<div class="a" style="left:518px;top:80px;width:15px;height:15px;background:#ffa6ff"></div>
<div class="t" style="left:538.67px;top:79.67px;letter-spacing:0.129px;">External symbol</div>
<div class="a" style="left:647px;top:80px;width:15px;height:15px;background:#32cd32"></div>
<div class="t" style="left:667.27px;top:79.67px;letter-spacing:0.188px;">Lumina function</div>
<div class="a" style="left:0;top:134px;width:1180px;height:1px;background:#b8b8b8"></div>
<div class="a" style="left:260px;top:106px;width:184px;height:29px;background:#dedede;border:1px solid #b8b8b8;border-radius:3px 3px 0 0"></div>
<svg class="a" style="left:271px;top:112px" width="15" height="15" viewBox="0 0 15 15"><rect x="0.5" y="0.5" width="14" height="14" fill="#fff" stroke="#3b6fe0"/><rect x="1" y="1" width="13" height="2.2" fill="url(#gBlueBar)"/><path d="M7.5 4.3 L11.5 6.6 L11.5 10.9 L7.5 13.1 L3.5 10.9 L3.5 6.6 Z" fill="#e2edff" stroke="#3232ff" stroke-width="1.2" stroke-linejoin="round"/></svg>
<div class="t" style="left:312.97px;top:113.67px;letter-spacing:0.091px;">Hex View-1</div>
<svg class="a" style="left:414.4px;top:114.6px" width="12" height="12" viewBox="0 0 12 12"><rect x="0.4" y="0.4" width="10.8" height="10.8" rx="0.9" fill="url(#gOr)" stroke="#f8b060" stroke-width="0.5"/><path d="M3 3 L8.6 8.6 M8.6 3 L3 8.6" stroke="#fff" stroke-width="2" stroke-linecap="butt"/></svg>
<div class="a" style="left:443px;top:106px;width:185px;height:29px;background:#dedede;border:1px solid #b8b8b8;border-radius:3px 3px 0 0"></div>
<svg class="a" style="left:455px;top:112px" width="15" height="15" viewBox="0 0 15 15"><rect x="0.5" y="0.5" width="14" height="14" fill="#fff" stroke="#3b6fe0"/><rect x="1" y="1" width="13" height="2.2" fill="url(#gBlueBar)"/><path d="M6 4.4 H9.2 V6 H6 Z M6.2 5.2 L4.3 12.8 M9 5.2 L10.8 12.8 M4.8 12 L9.6 7.6 M6.2 7.8 L10 11" stroke="#13264f" stroke-width="1.3" fill="none" stroke-linecap="round"/></svg>
<div class="t" style="left:499.18px;top:113.67px;letter-spacing:0.244px;">Structures</div>
<svg class="a" style="left:598.2px;top:114.6px" width="12" height="12" viewBox="0 0 12 12"><rect x="0.4" y="0.4" width="10.8" height="10.8" rx="0.9" fill="url(#gOr)" stroke="#f8b060" stroke-width="0.5"/><path d="M3 3 L8.6 8.6 M8.6 3 L3 8.6" stroke="#fff" stroke-width="2" stroke-linecap="butt"/></svg>
<div class="a" style="left:627px;top:106px;width:186px;height:29px;background:#dedede;border:1px solid #b8b8b8;border-radius:3px 3px 0 0"></div>
<svg class="a" style="left:639.4px;top:112px" width="16" height="15" viewBox="0 0 16 15"><rect x="0.5" y="0.5" width="15" height="14" fill="#f2feff" stroke="#3b6fe0"/><rect x="1" y="1" width="14" height="2.2" fill="url(#gBlueBar)"/><path d="M5.5 3.0 L7.2 4.7 L5.5 6.4 L3.8 4.7 Z" fill="#14d8ff" stroke="#101c80" stroke-width="0.9"/><path d="M8 4.7 H11" stroke="#2050d8" stroke-width="1.3"/><path d="M5.5 6.8999999999999995 L7.2 8.6 L5.5 10.299999999999999 L3.8 8.6 Z" fill="#14d8ff" stroke="#101c80" stroke-width="0.9"/><path d="M8 8.6 H11" stroke="#2050d8" stroke-width="1.3"/><path d="M5.5 10.8 L7.2 12.5 L5.5 14.2 L3.8 12.5 Z" fill="#14d8ff" stroke="#101c80" stroke-width="0.9"/><path d="M8 12.5 H11" stroke="#2050d8" stroke-width="1.3"/></svg>
<div class="t" style="left:694.87px;top:113.67px;letter-spacing:0.526px;">Enums</div>
<svg class="a" style="left:783px;top:114.6px" width="12" height="12" viewBox="0 0 12 12"><rect x="0.4" y="0.4" width="10.8" height="10.8" rx="0.9" fill="url(#gOr)" stroke="#f8b060" stroke-width="0.5"/><path d="M3 3 L8.6 8.6 M8.6 3 L3 8.6" stroke="#fff" stroke-width="2" stroke-linecap="butt"/></svg>
<div class="a" style="left:812px;top:106px;width:185px;height:29px;background:#dedede;border:1px solid #b8b8b8;border-radius:3px 3px 0 0"></div>
<svg class="a" style="left:824px;top:112px" width="16" height="16" viewBox="0 0 16 16"><rect x="0.5" y="0.5" width="14" height="14" fill="#f4feff" stroke="#3b78e8"/><rect x="1" y="1" width="13" height="2.3" fill="url(#gBlueBar)"/><rect x="6.7" y="5.5" width="9" height="10" fill="#fbfdff" stroke="#1f4f8c" stroke-width="1.1"/><path d="M9 7.5h4M9 9.5h4M9 11.5h4M9 13.5h4" stroke="#1212c0" stroke-width="1.1"/><path d="M1.3 4.6 L3.6 6.4 L4.4 4.2 L8 7.5 L4.4 10.8 L3.9 8.8 L2 7.2 Z" fill="#30d830" stroke="#0a4a12" stroke-width="0.9" stroke-linejoin="round"/></svg>
<div class="t" style="left:876.57px;top:113.67px;letter-spacing:0.357px;">Imports</div>
<svg class="a" style="left:966.8px;top:114.6px" width="12" height="12" viewBox="0 0 12 12"><rect x="0.4" y="0.4" width="10.8" height="10.8" rx="0.9" fill="url(#gOr)" stroke="#f8b060" stroke-width="0.5"/><path d="M3 3 L8.6 8.6 M8.6 3 L3 8.6" stroke="#fff" stroke-width="2" stroke-linecap="butt"/></svg>
<div class="a" style="left:996px;top:106px;width:184px;height:29px;background:#dedede;border:1px solid #b8b8b8;border-radius:3px 3px 0 0"></div>
<svg class="a" style="left:1007.5px;top:112px" width="16" height="16" viewBox="0 0 16 16"><rect x="1.5" y="0.5" width="14" height="14" fill="#f4feff" stroke="#3b78e8"/><rect x="2" y="1" width="13" height="2.3" fill="url(#gBlueBar)"/><rect x="0.5" y="5.5" width="9" height="10" fill="#fbfdff" stroke="#1f4f8c" stroke-width="1.1"/><path d="M2.8 7.5h4M2.8 9.5h3M2.8 11.5h3M2.8 13.5h4" stroke="#1212c0" stroke-width="1.1"/><path d="M7 10.6 C7.4 8 8.6 7 10.4 6.8 L10.2 4.4 L14.2 7.6 L10.6 10.8 L10.5 8.8 C9 8.9 8 9.4 7 10.6 Z" fill="#30d830" stroke="#0a4a12" stroke-width="0.9" stroke-linejoin="round"/></svg>
<div class="t" style="left:1061.77px;top:113.67px;letter-spacing:0.184px;">Exports</div>
<svg class="a" style="left:1151px;top:114.6px" width="12" height="12" viewBox="0 0 12 12"><rect x="0.4" y="0.4" width="10.8" height="10.8" rx="0.9" fill="url(#gOr)" stroke="#f8b060" stroke-width="0.5"/><path d="M3 3 L8.6 8.6 M8.6 3 L3 8.6" stroke="#fff" stroke-width="2" stroke-linecap="butt"/></svg>
<div class="a" style="left:0;top:104px;width:260px;height:31px;background:linear-gradient(#f7f7f7,#efefef);border:1px solid #b0b0b0;border-bottom:none;border-radius:3px 3px 0 0"></div>
<div class="t" style="left:11.87px;top:112.67px;letter-spacing:0.123px;">Functions, IDA View-A, Segments</div>
<svg class="a" style="left:230.4px;top:114.6px" width="12" height="12" viewBox="0 0 12 12"><rect x="0.4" y="0.4" width="10.8" height="10.8" rx="0.9" fill="url(#gOr)" stroke="#f8b060" stroke-width="0.5"/><path d="M3 3 L8.6 8.6 M8.6 3 L3 8.6" stroke="#fff" stroke-width="2" stroke-linecap="butt"/></svg>
<div class="box" style="left:0px;top:136px;width:141px;height:30px"></div>
<svg class="a" style="left:4px;top:142px" width="16" height="16" viewBox="0 0 16 16"><rect x="0.5" y="0.5" width="15" height="15" fill="url(#gCy)" stroke="#3b6fe0" stroke-width="1"/><rect x="1" y="1" width="14" height="2.4" fill="url(#gBlueBar)"/><text x="8" y="12" font-family="DejaVu Serif,Liberation Serif,serif" font-style="italic" font-size="10.5" text-anchor="middle" fill="#10183c" stroke="#10183c" stroke-width="0.25">ƒ</text></svg>
<div class="t" style="left:25.67px;top:142.67px;letter-spacing:-0.171px;">Funct</div>
<div class="box" style="left:145px;top:136px;width:640px;height:30px"></div>
<svg class="a" style="left:149px;top:142px" width="16" height="16" viewBox="0 0 16 16"><rect x="0.5" y="0.5" width="13" height="13" fill="url(#gCy)" stroke="#2f72e8"/><rect x="1" y="1" width="12" height="2.4" fill="url(#gBlueBar)"/><rect x="5.5" y="3.5" width="10" height="12" fill="#f6faff" stroke="#24508e"/><path d="M7 5.5h3.8M9 7.5h5M9 9.5h5M7 11.5h4M9 13.5h5" stroke="#4a4a4a" stroke-width="1"/></svg>
<div class="t" style="left:170.77px;top:142.67px;letter-spacing:0.077px;">IDA View-A</div>
<div class="box" style="left:789px;top:136px;width:391px;height:30px"></div>
<svg class="a" style="left:793px;top:142px" width="15" height="16" viewBox="0 0 15 16"><rect x="0.5" y="0.5" width="14" height="15" fill="#fff" stroke="#2f6fe0" stroke-width="1"/><rect x="1" y="1" width="13" height="2.3" fill="url(#gBlueBar)"/><path d="M6.95 3.55 A5.3 5.3 0 0 0 1.6500000000000004 8.85 L6.95 8.85 Z" fill="url(#gqB)"/><path d="M8.05 3.55 A5.3 5.3 0 0 1 13.350000000000001 8.85 L8.05 8.85 Z" fill="url(#gqO)"/><path d="M6.45 14.65 A4.7 4.7 0 0 1 2.2500000000000004 10.450000000000001 L6.45 10.450000000000001 Z" fill="#d8fbff" stroke="#1f3fc4" stroke-width="1.1"/><path d="M8.05 15.25 A5.3 5.3 0 0 0 13.350000000000001 9.950000000000001 L8.05 9.950000000000001 Z" fill="url(#gqR)"/></svg>
<div class="t" style="left:815.18px;top:142.67px;letter-spacing:0.496px;">Segments</div>
<svg class="a" style="left:69.5px;top:146px" width="10" height="11" viewBox="0 0 10 11"><rect x="0.6" y="1" width="8" height="9" fill="none" stroke="#555" stroke-width="1"/><rect x="0.1" y="0" width="9" height="1.8" fill="#444"/></svg>
<svg class="a" style="left:94.3px;top:146px" width="12" height="11" viewBox="0 0 12 11"><rect x="0.5" y="0.5" width="10.6" height="10" rx="2.2" fill="#ececec" stroke="#6c6c6c" stroke-width="1"/><rect x="4.6" y="2.5" width="4.2" height="3.8" fill="none" stroke="#505050" stroke-width="1"/><rect x="2.7" y="4.6" width="4.2" height="3.8" fill="#ececec" stroke="#505050" stroke-width="1"/></svg>
<svg class="a" style="left:120.5px;top:146px" width="12" height="11" viewBox="0 0 12 11"><rect x="0.5" y="0.5" width="10.6" height="10" rx="2.2" fill="#ececec" stroke="#6c6c6c" stroke-width="1"/><path d="M3.2 2.9 L8.4 8.1 M8.4 2.9 L3.2 8.1" stroke="#404040" stroke-width="2"/></svg>
<svg class="a" style="left:714px;top:146px" width="10" height="11" viewBox="0 0 10 11"><rect x="0.6" y="1" width="8" height="9" fill="none" stroke="#555" stroke-width="1"/><rect x="0.1" y="0" width="9" height="1.8" fill="#444"/></svg>
<svg class="a" style="left:739px;top:146px" width="12" height="11" viewBox="0 0 12 11"><rect x="0.5" y="0.5" width="10.6" height="10" rx="2.2" fill="#ececec" stroke="#6c6c6c" stroke-width="1"/><rect x="4.6" y="2.5" width="4.2" height="3.8" fill="none" stroke="#505050" stroke-width="1"/><rect x="2.7" y="4.6" width="4.2" height="3.8" fill="#ececec" stroke="#505050" stroke-width="1"/></svg>
<svg class="a" style="left:765px;top:146px" width="12" height="11" viewBox="0 0 12 11"><rect x="0.5" y="0.5" width="10.6" height="10" rx="2.2" fill="#ececec" stroke="#6c6c6c" stroke-width="1"/><path d="M3.2 2.9 L8.4 8.1 M8.4 2.9 L3.2 8.1" stroke="#404040" stroke-width="2"/></svg>
<svg class="a" style="left:1108.5px;top:146px" width="10" height="11" viewBox="0 0 10 11"><rect x="0.6" y="1" width="8" height="9" fill="none" stroke="#555" stroke-width="1"/><rect x="0.1" y="0" width="9" height="1.8" fill="#444"/></svg>
<svg class="a" style="left:1133.5px;top:146px" width="12" height="11" viewBox="0 0 12 11"><rect x="0.5" y="0.5" width="10.6" height="10" rx="2.2" fill="#ececec" stroke="#6c6c6c" stroke-width="1"/><rect x="4.6" y="2.5" width="4.2" height="3.8" fill="none" stroke="#505050" stroke-width="1"/><rect x="2.7" y="4.6" width="4.2" height="3.8" fill="#ececec" stroke="#505050" stroke-width="1"/></svg>
<svg class="a" style="left:1159.7px;top:146px" width="12" height="11" viewBox="0 0 12 11"><rect x="0.5" y="0.5" width="10.6" height="10" rx="2.2" fill="#ececec" stroke="#6c6c6c" stroke-width="1"/><path d="M3.2 2.9 L8.4 8.1 M8.4 2.9 L3.2 8.1" stroke="#404040" stroke-width="2"/></svg>
<div class="a" style="left:0;top:168px;width:141px;height:590px;background:#fff;border:1px solid #c3c3c3;overflow:hidden">
<div class="hdr" style="left:0;top:0;width:126px;height:19px;border-right:1px solid #c9c9c9"></div>
<svg class="a" style="left:3px;top:19px" width="16" height="16" viewBox="0 0 16 16"><rect x="0.5" y="0.5" width="15" height="15" fill="url(#gCy)" stroke="#3b6fe0" stroke-width="1"/><rect x="1" y="1" width="14" height="2.4" fill="url(#gBlueBar)"/><text x="8" y="12" font-family="DejaVu Serif,Liberation Serif,serif" font-style="italic" font-size="10.5" text-anchor="middle" fill="#10183c" stroke="#10183c" stroke-width="0.25">ƒ</text></svg>
<svg class="a" style="left:3px;top:36px" width="16" height="16" viewBox="0 0 16 16"><rect x="0.5" y="0.5" width="15" height="15" fill="url(#gCy)" stroke="#3b6fe0" stroke-width="1"/><rect x="1" y="1" width="14" height="2.4" fill="url(#gBlueBar)"/><text x="8" y="12" font-family="DejaVu Serif,Liberation Serif,serif" font-style="italic" font-size="10.5" text-anchor="middle" fill="#10183c" stroke="#10183c" stroke-width="0.25">ƒ</text></svg>
<svg class="a" style="left:3px;top:53px" width="16" height="16" viewBox="0 0 16 16"><rect x="0.5" y="0.5" width="15" height="15" fill="url(#gCy)" stroke="#3b6fe0" stroke-width="1"/><rect x="1" y="1" width="14" height="2.4" fill="url(#gBlueBar)"/><text x="8" y="12" font-family="DejaVu Serif,Liberation Serif,serif" font-style="italic" font-size="10.5" text-anchor="middle" fill="#10183c" stroke="#10183c" stroke-width="0.25">ƒ</text></svg>
<svg class="a" style="left:3px;top:70px" width="16" height="16" viewBox="0 0 16 16"><rect x="0.5" y="0.5" width="15" height="15" fill="url(#gCy)" stroke="#3b6fe0" stroke-width="1"/><rect x="1" y="1" width="14" height="2.4" fill="url(#gBlueBar)"/><text x="8" y="12" font-family="DejaVu Serif,Liberation Serif,serif" font-style="italic" font-size="10.5" text-anchor="middle" fill="#10183c" stroke="#10183c" stroke-width="0.25">ƒ</text></svg>
<svg class="a" style="left:3px;top:87px" width="16" height="16" viewBox="0 0 16 16"><rect x="0.5" y="0.5" width="15" height="15" fill="url(#gCy)" stroke="#3b6fe0" stroke-width="1"/><rect x="1" y="1" width="14" height="2.4" fill="url(#gBlueBar)"/><text x="8" y="12" font-family="DejaVu Serif,Liberation Serif,serif" font-style="italic" font-size="10.5" text-anchor="middle" fill="#10183c" stroke="#10183c" stroke-width="0.25">ƒ</text></svg>
<svg class="a" style="left:3px;top:104px" width="16" height="16" viewBox="0 0 16 16"><rect x="0.5" y="0.5" width="15" height="15" fill="url(#gCy)" stroke="#3b6fe0" stroke-width="1"/><rect x="1" y="1" width="14" height="2.4" fill="url(#gBlueBar)"/><text x="8" y="12" font-family="DejaVu Serif,Liberation Serif,serif" font-style="italic" font-size="10.5" text-anchor="middle" fill="#10183c" stroke="#10183c" stroke-width="0.25">ƒ</text></svg>
<svg class="a" style="left:3px;top:121px" width="16" height="16" viewBox="0 0 16 16"><rect x="0.5" y="0.5" width="15" height="15" fill="url(#gCy)" stroke="#3b6fe0" stroke-width="1"/><rect x="1" y="1" width="14" height="2.4" fill="url(#gBlueBar)"/><text x="8" y="12" font-family="DejaVu Serif,Liberation Serif,serif" font-style="italic" font-size="10.5" text-anchor="middle" fill="#10183c" stroke="#10183c" stroke-width="0.25">ƒ</text></svg>
<svg class="a" style="left:3px;top:138px" width="16" height="16" viewBox="0 0 16 16"><rect x="0.5" y="0.5" width="15" height="15" fill="url(#gCy)" stroke="#3b6fe0" stroke-width="1"/><rect x="1" y="1" width="14" height="2.4" fill="url(#gBlueBar)"/><text x="8" y="12" font-family="DejaVu Serif,Liberation Serif,serif" font-style="italic" font-size="10.5" text-anchor="middle" fill="#10183c" stroke="#10183c" stroke-width="0.25">ƒ</text></svg>
<svg class="a" style="left:3px;top:155px" width="16" height="16" viewBox="0 0 16 16"><rect x="0.5" y="0.5" width="15" height="15" fill="url(#gCy)" stroke="#3b6fe0" stroke-width="1"/><rect x="1" y="1" width="14" height="2.4" fill="url(#gBlueBar)"/><text x="8" y="12" font-family="DejaVu Serif,Liberation Serif,serif" font-style="italic" font-size="10.5" text-anchor="middle" fill="#10183c" stroke="#10183c" stroke-width="0.25">ƒ</text></svg>
<svg class="a" style="left:3px;top:172px" width="16" height="16" viewBox="0 0 16 16"><rect x="0.5" y="0.5" width="15" height="15" fill="url(#gCy)" stroke="#3b6fe0" stroke-width="1"/><rect x="1" y="1" width="14" height="2.4" fill="url(#gBlueBar)"/><text x="8" y="12" font-family="DejaVu Serif,Liberation Serif,serif" font-style="italic" font-size="10.5" text-anchor="middle" fill="#10183c" stroke="#10183c" stroke-width="0.25">ƒ</text></svg>
<svg class="a" style="left:3px;top:189px" width="16" height="16" viewBox="0 0 16 16"><rect x="0.5" y="0.5" width="15" height="15" fill="url(#gCy)" stroke="#3b6fe0" stroke-width="1"/><rect x="1" y="1" width="14" height="2.4" fill="url(#gBlueBar)"/><text x="8" y="12" font-family="DejaVu Serif,Liberation Serif,serif" font-style="italic" font-size="10.5" text-anchor="middle" fill="#10183c" stroke="#10183c" stroke-width="0.25">ƒ</text></svg>
<svg class="a" style="left:3px;top:206px" width="16" height="16" viewBox="0 0 16 16"><rect x="0.5" y="0.5" width="15" height="15" fill="url(#gCy)" stroke="#3b6fe0" stroke-width="1"/><rect x="1" y="1" width="14" height="2.4" fill="url(#gBlueBar)"/><text x="8" y="12" font-family="DejaVu Serif,Liberation Serif,serif" font-style="italic" font-size="10.5" text-anchor="middle" fill="#10183c" stroke="#10183c" stroke-width="0.25">ƒ</text></svg>
<svg class="a" style="left:3px;top:223px" width="16" height="16" viewBox="0 0 16 16"><rect x="0.5" y="0.5" width="15" height="15" fill="url(#gCy)" stroke="#3b6fe0" stroke-width="1"/><rect x="1" y="1" width="14" height="2.4" fill="url(#gBlueBar)"/><text x="8" y="12" font-family="DejaVu Serif,Liberation Serif,serif" font-style="italic" font-size="10.5" text-anchor="middle" fill="#10183c" stroke="#10183c" stroke-width="0.25">ƒ</text></svg>
<svg class="a" style="left:3px;top:240px" width="16" height="16" viewBox="0 0 16 16"><rect x="0.5" y="0.5" width="15" height="15" fill="url(#gCy)" stroke="#3b6fe0" stroke-width="1"/><rect x="1" y="1" width="14" height="2.4" fill="url(#gBlueBar)"/><text x="8" y="12" font-family="DejaVu Serif,Liberation Serif,serif" font-style="italic" font-size="10.5" text-anchor="middle" fill="#10183c" stroke="#10183c" stroke-width="0.25">ƒ</text></svg>
<svg class="a" style="left:3px;top:257px" width="16" height="16" viewBox="0 0 16 16"><rect x="0.5" y="0.5" width="15" height="15" fill="url(#gCy)" stroke="#3b6fe0" stroke-width="1"/><rect x="1" y="1" width="14" height="2.4" fill="url(#gBlueBar)"/><text x="8" y="12" font-family="DejaVu Serif,Liberation Serif,serif" font-style="italic" font-size="10.5" text-anchor="middle" fill="#10183c" stroke="#10183c" stroke-width="0.25">ƒ</text></svg>
<svg class="a" style="left:3px;top:274px" width="16" height="16" viewBox="0 0 16 16"><rect x="0.5" y="0.5" width="15" height="15" fill="url(#gCy)" stroke="#3b6fe0" stroke-width="1"/><rect x="1" y="1" width="14" height="2.4" fill="url(#gBlueBar)"/><text x="8" y="12" font-family="DejaVu Serif,Liberation Serif,serif" font-style="italic" font-size="10.5" text-anchor="middle" fill="#10183c" stroke="#10183c" stroke-width="0.25">ƒ</text></svg>
<svg class="a" style="left:3px;top:291px" width="16" height="16" viewBox="0 0 16 16"><rect x="0.5" y="0.5" width="15" height="15" fill="url(#gCy)" stroke="#3b6fe0" stroke-width="1"/><rect x="1" y="1" width="14" height="2.4" fill="url(#gBlueBar)"/><text x="8" y="12" font-family="DejaVu Serif,Liberation Serif,serif" font-style="italic" font-size="10.5" text-anchor="middle" fill="#10183c" stroke="#10183c" stroke-width="0.25">ƒ</text></svg>
<svg class="a" style="left:3px;top:308px" width="16" height="16" viewBox="0 0 16 16"><rect x="0.5" y="0.5" width="15" height="15" fill="url(#gCy)" stroke="#3b6fe0" stroke-width="1"/><rect x="1" y="1" width="14" height="2.4" fill="url(#gBlueBar)"/><text x="8" y="12" font-family="DejaVu Serif,Liberation Serif,serif" font-style="italic" font-size="10.5" text-anchor="middle" fill="#10183c" stroke="#10183c" stroke-width="0.25">ƒ</text></svg>
<svg class="a" style="left:3px;top:325px" width="16" height="16" viewBox="0 0 16 16"><rect x="0.5" y="0.5" width="15" height="15" fill="url(#gCy)" stroke="#3b6fe0" stroke-width="1"/><rect x="1" y="1" width="14" height="2.4" fill="url(#gBlueBar)"/><text x="8" y="12" font-family="DejaVu Serif,Liberation Serif,serif" font-style="italic" font-size="10.5" text-anchor="middle" fill="#10183c" stroke="#10183c" stroke-width="0.25">ƒ</text></svg>
<svg class="a" style="left:3px;top:342px" width="16" height="16" viewBox="0 0 16 16"><rect x="0.5" y="0.5" width="15" height="15" fill="url(#gCy)" stroke="#3b6fe0" stroke-width="1"/><rect x="1" y="1" width="14" height="2.4" fill="url(#gBlueBar)"/><text x="8" y="12" font-family="DejaVu Serif,Liberation Serif,serif" font-style="italic" font-size="10.5" text-anchor="middle" fill="#10183c" stroke="#10183c" stroke-width="0.25">ƒ</text></svg>
<svg class="a" style="left:3px;top:359px" width="16" height="16" viewBox="0 0 16 16"><rect x="0.5" y="0.5" width="15" height="15" fill="url(#gCy)" stroke="#3b6fe0" stroke-width="1"/><rect x="1" y="1" width="14" height="2.4" fill="url(#gBlueBar)"/><text x="8" y="12" font-family="DejaVu Serif,Liberation Serif,serif" font-style="italic" font-size="10.5" text-anchor="middle" fill="#10183c" stroke="#10183c" stroke-width="0.25">ƒ</text></svg>
<svg class="a" style="left:3px;top:376px" width="16" height="16" viewBox="0 0 16 16"><rect x="0.5" y="0.5" width="15" height="15" fill="url(#gCy)" stroke="#3b6fe0" stroke-width="1"/><rect x="1" y="1" width="14" height="2.4" fill="url(#gBlueBar)"/><text x="8" y="12" font-family="DejaVu Serif,Liberation Serif,serif" font-style="italic" font-size="10.5" text-anchor="middle" fill="#10183c" stroke="#10183c" stroke-width="0.25">ƒ</text></svg>
<svg class="a" style="left:3px;top:393px" width="16" height="16" viewBox="0 0 16 16"><rect x="0.5" y="0.5" width="15" height="15" fill="url(#gCy)" stroke="#3b6fe0" stroke-width="1"/><rect x="1" y="1" width="14" height="2.4" fill="url(#gBlueBar)"/><text x="8" y="12" font-family="DejaVu Serif,Liberation Serif,serif" font-style="italic" font-size="10.5" text-anchor="middle" fill="#10183c" stroke="#10183c" stroke-width="0.25">ƒ</text></svg>
<svg class="a" style="left:3px;top:410px" width="16" height="16" viewBox="0 0 16 16"><rect x="0.5" y="0.5" width="15" height="15" fill="url(#gCy)" stroke="#3b6fe0" stroke-width="1"/><rect x="1" y="1" width="14" height="2.4" fill="url(#gBlueBar)"/><text x="8" y="12" font-family="DejaVu Serif,Liberation Serif,serif" font-style="italic" font-size="10.5" text-anchor="middle" fill="#10183c" stroke="#10183c" stroke-width="0.25">ƒ</text></svg>
<svg class="a" style="left:3px;top:427px" width="16" height="16" viewBox="0 0 16 16"><rect x="0.5" y="0.5" width="15" height="15" fill="url(#gCy)" stroke="#3b6fe0" stroke-width="1"/><rect x="1" y="1" width="14" height="2.4" fill="url(#gBlueBar)"/><text x="8" y="12" font-family="DejaVu Serif,Liberation Serif,serif" font-style="italic" font-size="10.5" text-anchor="middle" fill="#10183c" stroke="#10183c" stroke-width="0.25">ƒ</text></svg>
<svg class="a" style="left:3px;top:444px" width="16" height="16" viewBox="0 0 16 16"><rect x="0.5" y="0.5" width="15" height="15" fill="url(#gCy)" stroke="#3b6fe0" stroke-width="1"/><rect x="1" y="1" width="14" height="2.4" fill="url(#gBlueBar)"/><text x="8" y="12" font-family="DejaVu Serif,Liberation Serif,serif" font-style="italic" font-size="10.5" text-anchor="middle" fill="#10183c" stroke="#10183c" stroke-width="0.25">ƒ</text></svg>
<svg class="a" style="left:3px;top:461px" width="16" height="16" viewBox="0 0 16 16"><rect x="0.5" y="0.5" width="15" height="15" fill="url(#gCy)" stroke="#3b6fe0" stroke-width="1"/><rect x="1" y="1" width="14" height="2.4" fill="url(#gBlueBar)"/><text x="8" y="12" font-family="DejaVu Serif,Liberation Serif,serif" font-style="italic" font-size="10.5" text-anchor="middle" fill="#10183c" stroke="#10183c" stroke-width="0.25">ƒ</text></svg>
<svg class="a" style="left:3px;top:478px" width="16" height="16" viewBox="0 0 16 16"><rect x="0.5" y="0.5" width="15" height="15" fill="url(#gCy)" stroke="#3b6fe0" stroke-width="1"/><rect x="1" y="1" width="14" height="2.4" fill="url(#gBlueBar)"/><text x="8" y="12" font-family="DejaVu Serif,Liberation Serif,serif" font-style="italic" font-size="10.5" text-anchor="middle" fill="#10183c" stroke="#10183c" stroke-width="0.25">ƒ</text></svg>
<svg class="a" style="left:3px;top:495px" width="16" height="16" viewBox="0 0 16 16"><rect x="0.5" y="0.5" width="15" height="15" fill="url(#gCy)" stroke="#3b6fe0" stroke-width="1"/><rect x="1" y="1" width="14" height="2.4" fill="url(#gBlueBar)"/><text x="8" y="12" font-family="DejaVu Serif,Liberation Serif,serif" font-style="italic" font-size="10.5" text-anchor="middle" fill="#10183c" stroke="#10183c" stroke-width="0.25">ƒ</text></svg>
<svg class="a" style="left:3px;top:512px" width="16" height="16" viewBox="0 0 16 16"><rect x="0.5" y="0.5" width="15" height="15" fill="url(#gCy)" stroke="#3b6fe0" stroke-width="1"/><rect x="1" y="1" width="14" height="2.4" fill="url(#gBlueBar)"/><text x="8" y="12" font-family="DejaVu Serif,Liberation Serif,serif" font-style="italic" font-size="10.5" text-anchor="middle" fill="#10183c" stroke="#10183c" stroke-width="0.25">ƒ</text></svg>
<svg class="a" style="left:3px;top:529px" width="16" height="16" viewBox="0 0 16 16"><rect x="0.5" y="0.5" width="15" height="15" fill="url(#gCy)" stroke="#3b6fe0" stroke-width="1"/><rect x="1" y="1" width="14" height="2.4" fill="url(#gBlueBar)"/><text x="8" y="12" font-family="DejaVu Serif,Liberation Serif,serif" font-style="italic" font-size="10.5" text-anchor="middle" fill="#10183c" stroke="#10183c" stroke-width="0.25">ƒ</text></svg>
<svg class="a" style="left:3px;top:546px" width="16" height="16" viewBox="0 0 16 16"><rect x="0.5" y="0.5" width="15" height="15" fill="url(#gCy)" stroke="#3b6fe0" stroke-width="1"/><rect x="1" y="1" width="14" height="2.4" fill="url(#gBlueBar)"/><text x="8" y="12" font-family="DejaVu Serif,Liberation Serif,serif" font-style="italic" font-size="10.5" text-anchor="middle" fill="#10183c" stroke="#10183c" stroke-width="0.25">ƒ</text></svg>
<svg class="a" style="left:3px;top:563px" width="16" height="16" viewBox="0 0 16 16"><rect x="0.5" y="0.5" width="15" height="15" fill="url(#gCy)" stroke="#3b6fe0" stroke-width="1"/><rect x="1" y="1" width="14" height="2.4" fill="url(#gBlueBar)"/><text x="8" y="12" font-family="DejaVu Serif,Liberation Serif,serif" font-style="italic" font-size="10.5" text-anchor="middle" fill="#10183c" stroke="#10183c" stroke-width="0.25">ƒ</text></svg>
</div>
<div class="t" style="left:2.67px;top:170.67px;letter-spacing:0.118px;">Function name</div>
<div class="t" style="left:26.72px;top:188.67px;letter-spacing:0.2px">sub_328</div>
<div class="t" style="left:26.72px;top:205.67px;letter-spacing:0.2px">sub_1080</div>
<div class="t" style="left:26.72px;top:222.67px;letter-spacing:0.2px">sub_11B8</div>
<div class="t" style="left:26.72px;top:239.67px;letter-spacing:0.2px">sub_124C</div>
<div class="t" style="left:26.72px;top:256.67px;letter-spacing:0.2px">sub_1362</div>
<div class="t" style="left:26.72px;top:273.67px;letter-spacing:0.2px">sub_13BA</div>
<div class="t" style="left:26.72px;top:290.67px;letter-spacing:0.2px">sub_148E</div>
<div class="t" style="left:26.72px;top:307.67px;letter-spacing:0.2px">sub_1504</div>
<div class="t" style="left:26.72px;top:324.67px;letter-spacing:0.2px">sub_1576</div>
<div class="t" style="left:26.72px;top:341.67px;letter-spacing:0.2px">sub_15D4</div>
<div class="t" style="left:26.72px;top:358.67px;letter-spacing:0.2px">sub_165A</div>
<div class="t" style="left:26.72px;top:375.67px;letter-spacing:0.2px">sub_16BC</div>
<div class="t" style="left:26.72px;top:392.67px;letter-spacing:0.2px">sub_16E2</div>
<div class="t" style="left:26.72px;top:409.67px;letter-spacing:0.2px">sub_1708</div>
<div class="t" style="left:26.72px;top:426.67px;letter-spacing:0.2px">sub_1780</div>
<div class="t" style="left:26.72px;top:443.67px;letter-spacing:0.2px">sub_1806</div>
<div class="t" style="left:26.72px;top:460.67px;letter-spacing:0.2px">sub_187E</div>
<div class="t" style="left:26.72px;top:477.67px;letter-spacing:0.2px">sub_18B8</div>
<div class="t" style="left:26.72px;top:494.67px;letter-spacing:0.2px">sub_18E6</div>
<div class="t" style="left:26.72px;top:511.67px;letter-spacing:0.2px">sub_193C</div>
<div class="t" style="left:26.72px;top:528.67px;letter-spacing:0.2px">sub_1962</div>
<div class="t" style="left:26.72px;top:545.67px;letter-spacing:0.2px">sub_1988</div>
<div class="t" style="left:26.72px;top:562.67px;letter-spacing:0.2px">sub_19D2</div>
<div class="t" style="left:26.72px;top:579.67px;letter-spacing:0.2px">sub_1A14</div>
<div class="t" style="left:26.72px;top:596.67px;letter-spacing:0.2px">sub_1A3E</div>
<div class="t" style="left:26.72px;top:613.67px;letter-spacing:0.2px">sub_1B7A</div>
<div class="t" style="left:26.72px;top:630.67px;letter-spacing:0.2px">sub_1E50</div>
<div class="t" style="left:26.72px;top:647.67px;letter-spacing:0.2px">sub_200E</div>
<div class="t" style="left:26.72px;top:664.67px;letter-spacing:0.2px">sub_2014</div>
<div class="t" style="left:26.72px;top:681.67px;letter-spacing:0.2px">sub_201A</div>
<div class="t" style="left:26.72px;top:698.67px;letter-spacing:0.2px">sub_2020</div>
<div class="t" style="left:26.72px;top:715.67px;letter-spacing:0.2px">sub_2026</div>
<div class="t" style="left:26.72px;top:732.67px;letter-spacing:0.2px">sub_202C</div>
<div class="a" style="left:1px;top:743px;width:139px;height:14px;background:#efefef"></div>
<div class="sb" style="left:126px;top:169px;width:14px;height:574px;border-left:1px solid #c6c6c6"></div>
<div class="sbb" style="left:126px;top:169px;width:14px;height:14px"></div>
<svg class="a" style="left:129.2px;top:173.6px" width="8" height="4" viewBox="0 0 8 4"><path d="M0 4 L8 4 L4 0 Z" fill="#555"/></svg>
<div class="sbb" style="left:126px;top:729px;width:14px;height:14px"></div>
<svg class="a" style="left:129.2px;top:734.4px" width="8" height="4" viewBox="0 0 8 4"><path d="M0 0 L8 0 L4 4 Z" fill="#555"/></svg>
<div class="thv" style="left:126px;top:182px;width:14px;height:27px"></div>
<div class="sb" style="left:1px;top:743px;width:125px;height:14px;border-top:1px solid #c6c6c6"></div>
<div class="sbb" style="left:1px;top:743px;width:14px;height:14px"></div>
<svg class="a" style="left:5.6px;top:746.2px" width="4" height="8" viewBox="0 0 4 8"><path d="M4 0 L4 8 L0 4 Z" fill="#555"/></svg>
<div class="sbb" style="left:112px;top:743px;width:14px;height:14px"></div>
<svg class="a" style="left:117.4px;top:746.2px" width="4" height="8" viewBox="0 0 4 8"><path d="M0 0 L0 8 L4 4 Z" fill="#555"/></svg>
<div class="thh" style="left:14px;top:743px;width:28px;height:14px"></div>
<div class="a" style="left:145px;top:168px;width:75px;height:610px;background:#fff"></div>
<div class="box" style="left:224px;top:168px;width:561px;height:610px;background:#fff"></div>
<div class="code"><div class="cs" id="cs">
<div class="ln" style="top:0px">ROM:00017F98                 <span class="n">jmp     [lp]</span></div>
<div class="ln" style="top:13px">ROM:00017F98 <span class="c">-- End of function sub_17F7E</span></div>
<div class="ln" style="top:26px">ROM:00017F98</div>
<div class="ln" style="top:39px">ROM:00017F9A</div>
<div class="ln" style="top:52px">ROM:00017F9A <span class="c">-- =============== S U B R O U T I N E =======================================</span></div>
<div class="ln" style="top:65px">ROM:00017F9A</div>
<div class="ln" style="top:78px">ROM:00017F9A</div>
<div class="a" style="left:-20px;top:91px;width:600px;height:13px;background:#e6e6e6"></div>
<div class="ln" style="top:91px"><span class="b">ROM:00017F9A</span> <span style="background:#e6e62e">sub_17F9A</span><span class="n">:</span>                              <span class="x">-- CODE XREF: sub_162A0+1C</span></div>
<div class="ln" style="top:104px">ROM:00017F9A                                         <span class="x">-- sub_162A0+34 ...</span></div>
<div class="ln" style="top:117px">ROM:00017F9A</div>
<div class="ln" style="top:130px">ROM:00017F9A <span class="g">var_8           </span><span class="n">= -</span><span class="g">8</span></div>
<div class="ln" style="top:143px">ROM:00017F9A <span class="g">var_4           </span><span class="n">= -</span><span class="g">4</span></div>
<div class="ln" style="top:156px">ROM:00017F9A</div>
<div class="ln" style="top:169px">ROM:00017F9A                 <span class="n">add     -<span class="g">8</span>, sp</span></div>
<div class="ln" style="top:182px">ROM:00017F9C                 <span class="n">st.w    lp, <span class="g">8+var_4</span>[sp]</span></div>
<div class="ln" style="top:195px">ROM:00017FA0                 <span class="n">st.w    r29, <span class="g">8+var_8</span>[sp]</span></div>
<div class="ln" style="top:208px">ROM:00017FA4                 <span class="n">mov     <span class="g">0xFEDF0DCB</span>, r29</span></div>
<div class="ln" style="top:221px">ROM:00017FAA                 <span class="n">ld.bu   [r29], r10</span></div>
<div class="ln" style="top:234px">ROM:00017FAE                 <span class="n">addi    -<span class="g">0x3F</span>, r10, r0</span></div>
<div class="ln" style="top:247px">ROM:00017FB2                 <span class="n">bnc     loc_17FCC</span></div>
<div class="ln" style="top:260px">ROM:00017FB4                 <span class="n">di      </span></div>
<div class="ln" style="top:273px">ROM:00017FB8                 <span class="n">movea   <span class="g">0x2901</span>, r0, r11</span></div>
<div class="ln" style="top:286px">ROM:00017FBC                 <span class="n">movhi   <span class="g">0xFEDF</span>, r0, r14</span></div>
<div class="ln" style="top:299px">ROM:00017FC0                 <span class="n">st.h    r11, <span class="g">0xDC8</span>[r14]</span></div>
<div class="ln" style="top:312px">ROM:00017FC4                 <span class="n">jarl    sub_1A20C, lp</span></div>
<div class="ln" style="top:325px">ROM:00017FC8                 <span class="n">ld.bu   [r29], r10</span></div>
<div class="ln" style="top:338px">ROM:00017FCC</div>
<div class="ln" style="top:351px">ROM:00017FCC <span class="n">loc_17FCC:</span>                              <span class="x">-- CODE XREF: sub_17F9A+18</span></div>
<div class="ln" style="top:364px">ROM:00017FCC                 <span class="n">cmp     r0, r10</span></div>
<div class="ln" style="top:377px">ROM:00017FCE                 <span class="n">bnz     loc_1800C</span></div>
<div class="ln" style="top:390px">ROM:00017FD0                 <span class="n">stsr    psw, r7</span></div>
<div class="ln" style="top:403px">ROM:00017FD4                 <span class="n">di      </span></div>
<div class="ln" style="top:416px">ROM:00017FD8                 <span class="n">ld.hu   -<span class="g">0x9BB8</span>[r0], r8</span></div>
<div class="ln" style="top:429px">ROM:00017FDE                 <span class="n">ori     <span class="g">0xFFFE</span>, r0, r10</span></div>
<div class="ln" style="top:442px">ROM:00017FE2                 <span class="n">cmp     r10, r8</span></div>
<div class="ln" style="top:455px">ROM:00017FE4                 <span class="n">bnc     loc_17FEC</span></div>
<div class="ln" style="top:468px">ROM:00017FE6                 <span class="n">st.h    r10, -<span class="g">0x9BB8</span>[r0]</span></div>
<div class="ln" style="top:481px">ROM:00017FEC</div>
<div class="ln" style="top:494px">ROM:00017FEC <span class="n">loc_17FEC:</span>                              <span class="x">-- CODE XREF: sub_17F9A+4A</span></div>
<div class="ln" style="top:507px">ROM:00017FEC                 <span class="n">andi    <span class="g">0x20</span>, r7, r7</span></div>
<div class="ln" style="top:520px">ROM:00017FF0                 <span class="n">stsr    psw, r9</span></div>
<div class="ln" style="top:533px">ROM:00017FF4                 <span class="n">movea   -<span class="g">0x21</span>, r0, r14</span></div>
<div class="ln" style="top:546px">ROM:00017FF8                 <span class="n">and     r14, r9</span></div>
<div class="ln" style="top:559px">ROM:00017FFA                 <span class="n">or      r7, r9</span></div>
<div class="ln" style="top:572px">ROM:00017FFC                 <span class="n">ldsr    r9, psw</span></div>
</div></div>
<svg class="a" style="left:230.5px;top:342px" width="7" height="4" viewBox="0 0 7 4"><path d="M0 0 L7 0 L3.5 4 Z" fill="#666"/></svg>
<div class="a" style="left:225px;top:744px;width:545px;height:19px;background:#efefef"></div>
<div class="t m" style="left:227.6px;top:747.4px;color:#484848;font-size:11.5px;transform-origin:0 0;transform:scaleX(1.1435)">00017F9A 00017F9A: sub_17F9A (Synchronized with Hex View-1)</div>
<div class="sb" style="left:770px;top:169px;width:14px;height:594px;border-left:1px solid #c6c6c6"></div>
<div class="sbb" style="left:770px;top:169px;width:14px;height:14px"></div>
<svg class="a" style="left:773.2px;top:173.6px" width="8" height="4" viewBox="0 0 8 4"><path d="M0 4 L8 4 L4 0 Z" fill="#555"/></svg>
<div class="sbb" style="left:770px;top:749px;width:14px;height:14px"></div>
<svg class="a" style="left:773.2px;top:754.4px" width="8" height="4" viewBox="0 0 8 4"><path d="M0 0 L8 0 L4 4 Z" fill="#555"/></svg>
<div class="thv" style="left:770px;top:192px;width:14px;height:27px"></div>
<div class="sb" style="left:225px;top:763px;width:545px;height:14px;border-top:1px solid #c6c6c6"></div>
<div class="sbb" style="left:225px;top:763px;width:14px;height:14px"></div>
<svg class="a" style="left:229.6px;top:766.2px" width="4" height="8" viewBox="0 0 4 8"><path d="M4 0 L4 8 L0 4 Z" fill="#555"/></svg>
<div class="sbb" style="left:756px;top:763px;width:14px;height:14px"></div>
<svg class="a" style="left:761.4px;top:766.2px" width="4" height="8" viewBox="0 0 4 8"><path d="M0 0 L0 8 L4 4 Z" fill="#555"/></svg>
<div class="thh" style="left:239px;top:763px;width:357px;height:14px"></div>
<div class="a" style="left:770px;top:763px;width:14px;height:14px;background:#efefef;border:1px solid #c6c6c6"></div>
<svg class="a" style="left:145px;top:168px" width="75" height="610" viewBox="0 0 75 610"><line x1="53" y1="256.5" x2="68" y2="256.5" stroke="#adadad" stroke-width="1" stroke-dasharray="5 5"/><line x1="53.5" y1="256" x2="53.5" y2="367.9" stroke="#adadad" stroke-width="1" stroke-dasharray="5 5"/><line x1="53" y1="367.4" x2="58" y2="367.4" stroke="#adadad" stroke-width="1"/><path d="M57.19999999999999 363.20000000000005 L62 367.5 L57.19999999999999 371.79999999999995 Z" fill="#b2b2b2"/><line x1="37" y1="386.5" x2="71" y2="386.5" stroke="#adadad" stroke-width="1" stroke-dasharray="5 5"/><line x1="37.5" y1="386" x2="37.5" y2="602" stroke="#adadad" stroke-width="1" stroke-dasharray="5 5"/><path d="M33 602 L42 602 L37.5 607.2 Z" fill="#b2b2b2"/><line x1="53" y1="464.5" x2="68" y2="464.5" stroke="#adadad" stroke-width="1" stroke-dasharray="5 5"/><line x1="53.5" y1="464" x2="53.5" y2="510.9" stroke="#adadad" stroke-width="1" stroke-dasharray="5 5"/><line x1="53" y1="510.4" x2="58" y2="510.4" stroke="#adadad" stroke-width="1"/><path d="M57.19999999999999 506.20000000000005 L62 510.5 L57.19999999999999 514.8 Z" fill="#b2b2b2"/></svg>
<div class="a" style="left:209px;top:167px;width:6px;height:6px;border-radius:50%;background:#60d0ff"></div><div class="a" style="left:209px;top:336px;width:6px;height:6px;border-radius:50%;background:#60d0ff"></div><div class="a" style="left:209px;top:349px;width:6px;height:6px;border-radius:50%;background:#60d0ff"></div><div class="a" style="left:209px;top:362px;width:6px;height:6px;border-radius:50%;background:#60d0ff"></div><div class="a" style="left:209px;top:375px;width:6px;height:6px;border-radius:50%;background:#60d0ff"></div><div class="a" style="left:209px;top:388px;width:6px;height:6px;border-radius:50%;background:#60d0ff"></div><div class="a" style="left:209px;top:401px;width:6px;height:6px;border-radius:50%;background:#60d0ff"></div><div class="a" style="left:209px;top:414px;width:6px;height:6px;border-radius:50%;background:#60d0ff"></div><div class="a" style="left:209px;top:427px;width:6px;height:6px;border-radius:50%;background:#60d0ff"></div><div class="a" style="left:209px;top:440px;width:6px;height:6px;border-radius:50%;background:#60d0ff"></div><div class="a" style="left:209px;top:453px;width:6px;height:6px;border-radius:50%;background:#60d0ff"></div><div class="a" style="left:209px;top:466px;width:6px;height:6px;border-radius:50%;background:#60d0ff"></div><div class="a" style="left:209px;top:479px;width:6px;height:6px;border-radius:50%;background:#60d0ff"></div><div class="a" style="left:209px;top:492px;width:6px;height:6px;border-radius:50%;background:#60d0ff"></div><div class="a" style="left:209px;top:531px;width:6px;height:6px;border-radius:50%;background:#60d0ff"></div><div class="a" style="left:209px;top:544px;width:6px;height:6px;border-radius:50%;background:#60d0ff"></div><div class="a" style="left:209px;top:557px;width:6px;height:6px;border-radius:50%;background:#60d0ff"></div><div class="a" style="left:209px;top:570px;width:6px;height:6px;border-radius:50%;background:#60d0ff"></div><div class="a" style="left:209px;top:583px;width:6px;height:6px;border-radius:50%;background:#60d0ff"></div><div class="a" style="left:209px;top:596px;width:6px;height:6px;border-radius:50%;background:#60d0ff"></div><div class="a" style="left:209px;top:609px;width:6px;height:6px;border-radius:50%;background:#60d0ff"></div><div class="a" style="left:209px;top:622px;width:6px;height:6px;border-radius:50%;background:#60d0ff"></div><div class="a" style="left:209px;top:635px;width:6px;height:6px;border-radius:50%;background:#60d0ff"></div><div class="a" style="left:209px;top:674px;width:6px;height:6px;border-radius:50%;background:#60d0ff"></div><div class="a" style="left:209px;top:687px;width:6px;height:6px;border-radius:50%;background:#60d0ff"></div><div class="a" style="left:209px;top:700px;width:6px;height:6px;border-radius:50%;background:#60d0ff"></div><div class="a" style="left:209px;top:713px;width:6px;height:6px;border-radius:50%;background:#60d0ff"></div><div class="a" style="left:209px;top:726px;width:6px;height:6px;border-radius:50%;background:#60d0ff"></div><div class="a" style="left:209px;top:739px;width:6px;height:6px;border-radius:50%;background:#60d0ff"></div>
<div class="a" style="left:789px;top:168px;width:391px;height:590px;background:#fff;border:1px solid #c3c3c3;overflow:hidden">
<div class="hdr" style="left:0;top:0;width:376px;height:19px"></div>
<div class="a" style="left:174px;top:0;width:1px;height:19px;background:#c9c9c9"></div>
<div class="a" style="left:269px;top:0;width:1px;height:19px;background:#c9c9c9"></div>
<div class="a" style="left:364px;top:0;width:1px;height:19px;background:#c9c9c9"></div>
<svg class="a" style="left:3px;top:19px" width="15" height="16" viewBox="0 0 15 16"><rect x="0.5" y="0.5" width="14" height="15" fill="#fff" stroke="#2f6fe0" stroke-width="1"/><rect x="1" y="1" width="13" height="2.3" fill="url(#gBlueBar)"/><path d="M6.95 3.55 A5.3 5.3 0 0 0 1.6500000000000004 8.85 L6.95 8.85 Z" fill="url(#gqB)"/><path d="M8.05 3.55 A5.3 5.3 0 0 1 13.350000000000001 8.85 L8.05 8.85 Z" fill="url(#gqO)"/><path d="M6.45 14.65 A4.7 4.7 0 0 1 2.2500000000000004 10.450000000000001 L6.45 10.450000000000001 Z" fill="#d8fbff" stroke="#1f3fc4" stroke-width="1.1"/><path d="M8.05 15.25 A5.3 5.3 0 0 0 13.350000000000001 9.950000000000001 L8.05 9.950000000000001 Z" fill="url(#gqR)"/></svg>
<svg class="a" style="left:3px;top:36px" width="15" height="16" viewBox="0 0 15 16"><rect x="0.5" y="0.5" width="14" height="15" fill="#fff" stroke="#2f6fe0" stroke-width="1"/><rect x="1" y="1" width="13" height="2.3" fill="url(#gBlueBar)"/><path d="M6.95 3.55 A5.3 5.3 0 0 0 1.6500000000000004 8.85 L6.95 8.85 Z" fill="url(#gqB)"/><path d="M8.05 3.55 A5.3 5.3 0 0 1 13.350000000000001 8.85 L8.05 8.85 Z" fill="url(#gqO)"/><path d="M6.45 14.65 A4.7 4.7 0 0 1 2.2500000000000004 10.450000000000001 L6.45 10.450000000000001 Z" fill="#d8fbff" stroke="#1f3fc4" stroke-width="1.1"/><path d="M8.05 15.25 A5.3 5.3 0 0 0 13.350000000000001 9.950000000000001 L8.05 9.950000000000001 Z" fill="url(#gqR)"/></svg>
<svg class="a" style="left:3px;top:53px" width="15" height="16" viewBox="0 0 15 16"><rect x="0.5" y="0.5" width="14" height="15" fill="#fff" stroke="#2f6fe0" stroke-width="1"/><rect x="1" y="1" width="13" height="2.3" fill="url(#gBlueBar)"/><path d="M6.95 3.55 A5.3 5.3 0 0 0 1.6500000000000004 8.85 L6.95 8.85 Z" fill="url(#gqB)"/><path d="M8.05 3.55 A5.3 5.3 0 0 1 13.350000000000001 8.85 L8.05 8.85 Z" fill="url(#gqO)"/><path d="M6.45 14.65 A4.7 4.7 0 0 1 2.2500000000000004 10.450000000000001 L6.45 10.450000000000001 Z" fill="#d8fbff" stroke="#1f3fc4" stroke-width="1.1"/><path d="M8.05 15.25 A5.3 5.3 0 0 0 13.350000000000001 9.950000000000001 L8.05 9.950000000000001 Z" fill="url(#gqR)"/></svg>
<svg class="a" style="left:3px;top:70px" width="15" height="16" viewBox="0 0 15 16"><rect x="0.5" y="0.5" width="14" height="15" fill="#fff" stroke="#2f6fe0" stroke-width="1"/><rect x="1" y="1" width="13" height="2.3" fill="url(#gBlueBar)"/><path d="M6.95 3.55 A5.3 5.3 0 0 0 1.6500000000000004 8.85 L6.95 8.85 Z" fill="url(#gqB)"/><path d="M8.05 3.55 A5.3 5.3 0 0 1 13.350000000000001 8.85 L8.05 8.85 Z" fill="url(#gqO)"/><path d="M6.45 14.65 A4.7 4.7 0 0 1 2.2500000000000004 10.450000000000001 L6.45 10.450000000000001 Z" fill="#d8fbff" stroke="#1f3fc4" stroke-width="1.1"/><path d="M8.05 15.25 A5.3 5.3 0 0 0 13.350000000000001 9.950000000000001 L8.05 9.950000000000001 Z" fill="url(#gqR)"/></svg>
<svg class="a" style="left:3px;top:87px" width="15" height="16" viewBox="0 0 15 16"><rect x="0.5" y="0.5" width="14" height="15" fill="#fff" stroke="#2f6fe0" stroke-width="1"/><rect x="1" y="1" width="13" height="2.3" fill="url(#gBlueBar)"/><path d="M6.95 3.55 A5.3 5.3 0 0 0 1.6500000000000004 8.85 L6.95 8.85 Z" fill="url(#gqB)"/><path d="M8.05 3.55 A5.3 5.3 0 0 1 13.350000000000001 8.85 L8.05 8.85 Z" fill="url(#gqO)"/><path d="M6.45 14.65 A4.7 4.7 0 0 1 2.2500000000000004 10.450000000000001 L6.45 10.450000000000001 Z" fill="#d8fbff" stroke="#1f3fc4" stroke-width="1.1"/><path d="M8.05 15.25 A5.3 5.3 0 0 0 13.350000000000001 9.950000000000001 L8.05 9.950000000000001 Z" fill="url(#gqR)"/></svg>
<svg class="a" style="left:3px;top:104px" width="15" height="16" viewBox="0 0 15 16"><rect x="0.5" y="0.5" width="14" height="15" fill="#fff" stroke="#2f6fe0" stroke-width="1"/><rect x="1" y="1" width="13" height="2.3" fill="url(#gBlueBar)"/><path d="M6.95 3.55 A5.3 5.3 0 0 0 1.6500000000000004 8.85 L6.95 8.85 Z" fill="url(#gqB)"/><path d="M8.05 3.55 A5.3 5.3 0 0 1 13.350000000000001 8.85 L8.05 8.85 Z" fill="url(#gqO)"/><path d="M6.45 14.65 A4.7 4.7 0 0 1 2.2500000000000004 10.450000000000001 L6.45 10.450000000000001 Z" fill="#d8fbff" stroke="#1f3fc4" stroke-width="1.1"/><path d="M8.05 15.25 A5.3 5.3 0 0 0 13.350000000000001 9.950000000000001 L8.05 9.950000000000001 Z" fill="url(#gqR)"/></svg>
<div class="row sel" style="top:121px;width:376px"></div>
<svg class="a" style="left:3px;top:121px" width="15" height="16" viewBox="0 0 15 16"><rect x="0.5" y="0.5" width="14" height="15" fill="#fff" stroke="#2f6fe0" stroke-width="1"/><rect x="1" y="1" width="13" height="2.3" fill="url(#gBlueBar)"/><path d="M6.95 3.55 A5.3 5.3 0 0 0 1.6500000000000004 8.85 L6.95 8.85 Z" fill="url(#gqB)"/><path d="M8.05 3.55 A5.3 5.3 0 0 1 13.350000000000001 8.85 L8.05 8.85 Z" fill="url(#gqO)"/><path d="M6.45 14.65 A4.7 4.7 0 0 1 2.2500000000000004 10.450000000000001 L6.45 10.450000000000001 Z" fill="#d8fbff" stroke="#1f3fc4" stroke-width="1.1"/><path d="M8.05 15.25 A5.3 5.3 0 0 0 13.350000000000001 9.950000000000001 L8.05 9.950000000000001 Z" fill="url(#gqR)"/></svg>
<div class="a" style="left:3px;top:121px;width:15px;height:16px;background:rgba(48,140,198,0.32)"></div>
<div class="row sel" style="top:138px;width:376px"></div>
<svg class="a" style="left:3px;top:138px" width="15" height="16" viewBox="0 0 15 16"><rect x="0.5" y="0.5" width="14" height="15" fill="#fff" stroke="#2f6fe0" stroke-width="1"/><rect x="1" y="1" width="13" height="2.3" fill="url(#gBlueBar)"/><path d="M6.95 3.55 A5.3 5.3 0 0 0 1.6500000000000004 8.85 L6.95 8.85 Z" fill="url(#gqB)"/><path d="M8.05 3.55 A5.3 5.3 0 0 1 13.350000000000001 8.85 L8.05 8.85 Z" fill="url(#gqO)"/><path d="M6.45 14.65 A4.7 4.7 0 0 1 2.2500000000000004 10.450000000000001 L6.45 10.450000000000001 Z" fill="#d8fbff" stroke="#1f3fc4" stroke-width="1.1"/><path d="M8.05 15.25 A5.3 5.3 0 0 0 13.350000000000001 9.950000000000001 L8.05 9.950000000000001 Z" fill="url(#gqR)"/></svg>
<div class="a" style="left:3px;top:138px;width:15px;height:16px;background:rgba(48,140,198,0.32)"></div>
<div class="row sel" style="top:155px;width:376px"></div>
<svg class="a" style="left:3px;top:155px" width="15" height="16" viewBox="0 0 15 16"><rect x="0.5" y="0.5" width="14" height="15" fill="#fff" stroke="#2f6fe0" stroke-width="1"/><rect x="1" y="1" width="13" height="2.3" fill="url(#gBlueBar)"/><path d="M6.95 3.55 A5.3 5.3 0 0 0 1.6500000000000004 8.85 L6.95 8.85 Z" fill="url(#gqB)"/><path d="M8.05 3.55 A5.3 5.3 0 0 1 13.350000000000001 8.85 L8.05 8.85 Z" fill="url(#gqO)"/><path d="M6.45 14.65 A4.7 4.7 0 0 1 2.2500000000000004 10.450000000000001 L6.45 10.450000000000001 Z" fill="#d8fbff" stroke="#1f3fc4" stroke-width="1.1"/><path d="M8.05 15.25 A5.3 5.3 0 0 0 13.350000000000001 9.950000000000001 L8.05 9.950000000000001 Z" fill="url(#gqR)"/></svg>
<div class="a" style="left:3px;top:155px;width:15px;height:16px;background:rgba(48,140,198,0.32)"></div>
<div class="row sel" style="top:172px;width:376px"></div>
<svg class="a" style="left:3px;top:172px" width="15" height="16" viewBox="0 0 15 16"><rect x="0.5" y="0.5" width="14" height="15" fill="#fff" stroke="#2f6fe0" stroke-width="1"/><rect x="1" y="1" width="13" height="2.3" fill="url(#gBlueBar)"/><path d="M6.95 3.55 A5.3 5.3 0 0 0 1.6500000000000004 8.85 L6.95 8.85 Z" fill="url(#gqB)"/><path d="M8.05 3.55 A5.3 5.3 0 0 1 13.350000000000001 8.85 L8.05 8.85 Z" fill="url(#gqO)"/><path d="M6.45 14.65 A4.7 4.7 0 0 1 2.2500000000000004 10.450000000000001 L6.45 10.450000000000001 Z" fill="#d8fbff" stroke="#1f3fc4" stroke-width="1.1"/><path d="M8.05 15.25 A5.3 5.3 0 0 0 13.350000000000001 9.950000000000001 L8.05 9.950000000000001 Z" fill="url(#gqR)"/></svg>
<div class="a" style="left:3px;top:172px;width:15px;height:16px;background:rgba(48,140,198,0.32)"></div>
<div class="row sel" style="top:189px;width:376px"></div>
<svg class="a" style="left:3px;top:189px" width="15" height="16" viewBox="0 0 15 16"><rect x="0.5" y="0.5" width="14" height="15" fill="#fff" stroke="#2f6fe0" stroke-width="1"/><rect x="1" y="1" width="13" height="2.3" fill="url(#gBlueBar)"/><path d="M6.95 3.55 A5.3 5.3 0 0 0 1.6500000000000004 8.85 L6.95 8.85 Z" fill="url(#gqB)"/><path d="M8.05 3.55 A5.3 5.3 0 0 1 13.350000000000001 8.85 L8.05 8.85 Z" fill="url(#gqO)"/><path d="M6.45 14.65 A4.7 4.7 0 0 1 2.2500000000000004 10.450000000000001 L6.45 10.450000000000001 Z" fill="#d8fbff" stroke="#1f3fc4" stroke-width="1.1"/><path d="M8.05 15.25 A5.3 5.3 0 0 0 13.350000000000001 9.950000000000001 L8.05 9.950000000000001 Z" fill="url(#gqR)"/></svg>
<div class="a" style="left:3px;top:189px;width:15px;height:16px;background:rgba(48,140,198,0.32)"></div>
<div class="row sel" style="top:206px;width:376px"></div>
<svg class="a" style="left:3px;top:206px" width="15" height="16" viewBox="0 0 15 16"><rect x="0.5" y="0.5" width="14" height="15" fill="#fff" stroke="#2f6fe0" stroke-width="1"/><rect x="1" y="1" width="13" height="2.3" fill="url(#gBlueBar)"/><path d="M6.95 3.55 A5.3 5.3 0 0 0 1.6500000000000004 8.85 L6.95 8.85 Z" fill="url(#gqB)"/><path d="M8.05 3.55 A5.3 5.3 0 0 1 13.350000000000001 8.85 L8.05 8.85 Z" fill="url(#gqO)"/><path d="M6.45 14.65 A4.7 4.7 0 0 1 2.2500000000000004 10.450000000000001 L6.45 10.450000000000001 Z" fill="#d8fbff" stroke="#1f3fc4" stroke-width="1.1"/><path d="M8.05 15.25 A5.3 5.3 0 0 0 13.350000000000001 9.950000000000001 L8.05 9.950000000000001 Z" fill="url(#gqR)"/></svg>
<div class="a" style="left:3px;top:206px;width:15px;height:16px;background:rgba(48,140,198,0.32)"></div>
<div class="row sel" style="top:223px;width:376px"></div>
<svg class="a" style="left:3px;top:223px" width="15" height="16" viewBox="0 0 15 16"><rect x="0.5" y="0.5" width="14" height="15" fill="#fff" stroke="#2f6fe0" stroke-width="1"/><rect x="1" y="1" width="13" height="2.3" fill="url(#gBlueBar)"/><path d="M6.95 3.55 A5.3 5.3 0 0 0 1.6500000000000004 8.85 L6.95 8.85 Z" fill="url(#gqB)"/><path d="M8.05 3.55 A5.3 5.3 0 0 1 13.350000000000001 8.85 L8.05 8.85 Z" fill="url(#gqO)"/><path d="M6.45 14.65 A4.7 4.7 0 0 1 2.2500000000000004 10.450000000000001 L6.45 10.450000000000001 Z" fill="#d8fbff" stroke="#1f3fc4" stroke-width="1.1"/><path d="M8.05 15.25 A5.3 5.3 0 0 0 13.350000000000001 9.950000000000001 L8.05 9.950000000000001 Z" fill="url(#gqR)"/></svg>
<div class="a" style="left:3px;top:223px;width:15px;height:16px;background:rgba(48,140,198,0.32)"></div>
<div class="row sel" style="top:240px;width:376px"></div>
<svg class="a" style="left:3px;top:240px" width="15" height="16" viewBox="0 0 15 16"><rect x="0.5" y="0.5" width="14" height="15" fill="#fff" stroke="#2f6fe0" stroke-width="1"/><rect x="1" y="1" width="13" height="2.3" fill="url(#gBlueBar)"/><path d="M6.95 3.55 A5.3 5.3 0 0 0 1.6500000000000004 8.85 L6.95 8.85 Z" fill="url(#gqB)"/><path d="M8.05 3.55 A5.3 5.3 0 0 1 13.350000000000001 8.85 L8.05 8.85 Z" fill="url(#gqO)"/><path d="M6.45 14.65 A4.7 4.7 0 0 1 2.2500000000000004 10.450000000000001 L6.45 10.450000000000001 Z" fill="#d8fbff" stroke="#1f3fc4" stroke-width="1.1"/><path d="M8.05 15.25 A5.3 5.3 0 0 0 13.350000000000001 9.950000000000001 L8.05 9.950000000000001 Z" fill="url(#gqR)"/></svg>
<div class="a" style="left:3px;top:240px;width:15px;height:16px;background:rgba(48,140,198,0.32)"></div>
<div class="row sel" style="top:257px;width:376px"></div>
<svg class="a" style="left:3px;top:257px" width="15" height="16" viewBox="0 0 15 16"><rect x="0.5" y="0.5" width="14" height="15" fill="#fff" stroke="#2f6fe0" stroke-width="1"/><rect x="1" y="1" width="13" height="2.3" fill="url(#gBlueBar)"/><path d="M6.95 3.55 A5.3 5.3 0 0 0 1.6500000000000004 8.85 L6.95 8.85 Z" fill="url(#gqB)"/><path d="M8.05 3.55 A5.3 5.3 0 0 1 13.350000000000001 8.85 L8.05 8.85 Z" fill="url(#gqO)"/><path d="M6.45 14.65 A4.7 4.7 0 0 1 2.2500000000000004 10.450000000000001 L6.45 10.450000000000001 Z" fill="#d8fbff" stroke="#1f3fc4" stroke-width="1.1"/><path d="M8.05 15.25 A5.3 5.3 0 0 0 13.350000000000001 9.950000000000001 L8.05 9.950000000000001 Z" fill="url(#gqR)"/></svg>
<div class="a" style="left:3px;top:257px;width:15px;height:16px;background:rgba(48,140,198,0.32)"></div>
<div class="row sel" style="top:274px;width:376px"></div>
<svg class="a" style="left:3px;top:274px" width="15" height="16" viewBox="0 0 15 16"><rect x="0.5" y="0.5" width="14" height="15" fill="#fff" stroke="#2f6fe0" stroke-width="1"/><rect x="1" y="1" width="13" height="2.3" fill="url(#gBlueBar)"/><path d="M6.95 3.55 A5.3 5.3 0 0 0 1.6500000000000004 8.85 L6.95 8.85 Z" fill="url(#gqB)"/><path d="M8.05 3.55 A5.3 5.3 0 0 1 13.350000000000001 8.85 L8.05 8.85 Z" fill="url(#gqO)"/><path d="M6.45 14.65 A4.7 4.7 0 0 1 2.2500000000000004 10.450000000000001 L6.45 10.450000000000001 Z" fill="#d8fbff" stroke="#1f3fc4" stroke-width="1.1"/><path d="M8.05 15.25 A5.3 5.3 0 0 0 13.350000000000001 9.950000000000001 L8.05 9.950000000000001 Z" fill="url(#gqR)"/></svg>
<div class="a" style="left:3px;top:274px;width:15px;height:16px;background:rgba(48,140,198,0.32)"></div>
<div class="row sel" style="top:291px;width:376px"></div>
<svg class="a" style="left:3px;top:291px" width="15" height="16" viewBox="0 0 15 16"><rect x="0.5" y="0.5" width="14" height="15" fill="#fff" stroke="#2f6fe0" stroke-width="1"/><rect x="1" y="1" width="13" height="2.3" fill="url(#gBlueBar)"/><path d="M6.95 3.55 A5.3 5.3 0 0 0 1.6500000000000004 8.85 L6.95 8.85 Z" fill="url(#gqB)"/><path d="M8.05 3.55 A5.3 5.3 0 0 1 13.350000000000001 8.85 L8.05 8.85 Z" fill="url(#gqO)"/><path d="M6.45 14.65 A4.7 4.7 0 0 1 2.2500000000000004 10.450000000000001 L6.45 10.450000000000001 Z" fill="#d8fbff" stroke="#1f3fc4" stroke-width="1.1"/><path d="M8.05 15.25 A5.3 5.3 0 0 0 13.350000000000001 9.950000000000001 L8.05 9.950000000000001 Z" fill="url(#gqR)"/></svg>
<div class="a" style="left:3px;top:291px;width:15px;height:16px;background:rgba(48,140,198,0.32)"></div>
<div class="row sel" style="top:308px;width:376px"></div>
<svg class="a" style="left:3px;top:308px" width="15" height="16" viewBox="0 0 15 16"><rect x="0.5" y="0.5" width="14" height="15" fill="#fff" stroke="#2f6fe0" stroke-width="1"/><rect x="1" y="1" width="13" height="2.3" fill="url(#gBlueBar)"/><path d="M6.95 3.55 A5.3 5.3 0 0 0 1.6500000000000004 8.85 L6.95 8.85 Z" fill="url(#gqB)"/><path d="M8.05 3.55 A5.3 5.3 0 0 1 13.350000000000001 8.85 L8.05 8.85 Z" fill="url(#gqO)"/><path d="M6.45 14.65 A4.7 4.7 0 0 1 2.2500000000000004 10.450000000000001 L6.45 10.450000000000001 Z" fill="#d8fbff" stroke="#1f3fc4" stroke-width="1.1"/><path d="M8.05 15.25 A5.3 5.3 0 0 0 13.350000000000001 9.950000000000001 L8.05 9.950000000000001 Z" fill="url(#gqR)"/></svg>
<div class="a" style="left:3px;top:308px;width:15px;height:16px;background:rgba(48,140,198,0.32)"></div>
<div class="row sel" style="top:325px;width:376px"></div>
<svg class="a" style="left:3px;top:325px" width="15" height="16" viewBox="0 0 15 16"><rect x="0.5" y="0.5" width="14" height="15" fill="#fff" stroke="#2f6fe0" stroke-width="1"/><rect x="1" y="1" width="13" height="2.3" fill="url(#gBlueBar)"/><path d="M6.95 3.55 A5.3 5.3 0 0 0 1.6500000000000004 8.85 L6.95 8.85 Z" fill="url(#gqB)"/><path d="M8.05 3.55 A5.3 5.3 0 0 1 13.350000000000001 8.85 L8.05 8.85 Z" fill="url(#gqO)"/><path d="M6.45 14.65 A4.7 4.7 0 0 1 2.2500000000000004 10.450000000000001 L6.45 10.450000000000001 Z" fill="#d8fbff" stroke="#1f3fc4" stroke-width="1.1"/><path d="M8.05 15.25 A5.3 5.3 0 0 0 13.350000000000001 9.950000000000001 L8.05 9.950000000000001 Z" fill="url(#gqR)"/></svg>
<div class="a" style="left:3px;top:325px;width:15px;height:16px;background:rgba(48,140,198,0.32)"></div>
<div class="row sel" style="top:342px;width:376px"></div>
<svg class="a" style="left:3px;top:342px" width="15" height="16" viewBox="0 0 15 16"><rect x="0.5" y="0.5" width="14" height="15" fill="#fff" stroke="#2f6fe0" stroke-width="1"/><rect x="1" y="1" width="13" height="2.3" fill="url(#gBlueBar)"/><path d="M6.95 3.55 A5.3 5.3 0 0 0 1.6500000000000004 8.85 L6.95 8.85 Z" fill="url(#gqB)"/><path d="M8.05 3.55 A5.3 5.3 0 0 1 13.350000000000001 8.85 L8.05 8.85 Z" fill="url(#gqO)"/><path d="M6.45 14.65 A4.7 4.7 0 0 1 2.2500000000000004 10.450000000000001 L6.45 10.450000000000001 Z" fill="#d8fbff" stroke="#1f3fc4" stroke-width="1.1"/><path d="M8.05 15.25 A5.3 5.3 0 0 0 13.350000000000001 9.950000000000001 L8.05 9.950000000000001 Z" fill="url(#gqR)"/></svg>
<div class="a" style="left:3px;top:342px;width:15px;height:16px;background:rgba(48,140,198,0.32)"></div>
<div class="row sel" style="top:359px;width:376px"></div>
<svg class="a" style="left:3px;top:359px" width="15" height="16" viewBox="0 0 15 16"><rect x="0.5" y="0.5" width="14" height="15" fill="#fff" stroke="#2f6fe0" stroke-width="1"/><rect x="1" y="1" width="13" height="2.3" fill="url(#gBlueBar)"/><path d="M6.95 3.55 A5.3 5.3 0 0 0 1.6500000000000004 8.85 L6.95 8.85 Z" fill="url(#gqB)"/><path d="M8.05 3.55 A5.3 5.3 0 0 1 13.350000000000001 8.85 L8.05 8.85 Z" fill="url(#gqO)"/><path d="M6.45 14.65 A4.7 4.7 0 0 1 2.2500000000000004 10.450000000000001 L6.45 10.450000000000001 Z" fill="#d8fbff" stroke="#1f3fc4" stroke-width="1.1"/><path d="M8.05 15.25 A5.3 5.3 0 0 0 13.350000000000001 9.950000000000001 L8.05 9.950000000000001 Z" fill="url(#gqR)"/></svg>
<div class="a" style="left:3px;top:359px;width:15px;height:16px;background:rgba(48,140,198,0.32)"></div>
<svg class="a" style="left:3px;top:376px" width="15" height="16" viewBox="0 0 15 16"><rect x="0.5" y="0.5" width="14" height="15" fill="#fff" stroke="#2f6fe0" stroke-width="1"/><rect x="1" y="1" width="13" height="2.3" fill="url(#gBlueBar)"/><path d="M6.95 3.55 A5.3 5.3 0 0 0 1.6500000000000004 8.85 L6.95 8.85 Z" fill="url(#gqB)"/><path d="M8.05 3.55 A5.3 5.3 0 0 1 13.350000000000001 8.85 L8.05 8.85 Z" fill="url(#gqO)"/><path d="M6.45 14.65 A4.7 4.7 0 0 1 2.2500000000000004 10.450000000000001 L6.45 10.450000000000001 Z" fill="#d8fbff" stroke="#1f3fc4" stroke-width="1.1"/><path d="M8.05 15.25 A5.3 5.3 0 0 0 13.350000000000001 9.950000000000001 L8.05 9.950000000000001 Z" fill="url(#gqR)"/></svg>
<svg class="a" style="left:3px;top:393px" width="15" height="16" viewBox="0 0 15 16"><rect x="0.5" y="0.5" width="14" height="15" fill="#fff" stroke="#2f6fe0" stroke-width="1"/><rect x="1" y="1" width="13" height="2.3" fill="url(#gBlueBar)"/><path d="M6.95 3.55 A5.3 5.3 0 0 0 1.6500000000000004 8.85 L6.95 8.85 Z" fill="url(#gqB)"/><path d="M8.05 3.55 A5.3 5.3 0 0 1 13.350000000000001 8.85 L8.05 8.85 Z" fill="url(#gqO)"/><path d="M6.45 14.65 A4.7 4.7 0 0 1 2.2500000000000004 10.450000000000001 L6.45 10.450000000000001 Z" fill="#d8fbff" stroke="#1f3fc4" stroke-width="1.1"/><path d="M8.05 15.25 A5.3 5.3 0 0 0 13.350000000000001 9.950000000000001 L8.05 9.950000000000001 Z" fill="url(#gqR)"/></svg>
<svg class="a" style="left:3px;top:410px" width="15" height="16" viewBox="0 0 15 16"><rect x="0.5" y="0.5" width="14" height="15" fill="#fff" stroke="#2f6fe0" stroke-width="1"/><rect x="1" y="1" width="13" height="2.3" fill="url(#gBlueBar)"/><path d="M6.95 3.55 A5.3 5.3 0 0 0 1.6500000000000004 8.85 L6.95 8.85 Z" fill="url(#gqB)"/><path d="M8.05 3.55 A5.3 5.3 0 0 1 13.350000000000001 8.85 L8.05 8.85 Z" fill="url(#gqO)"/><path d="M6.45 14.65 A4.7 4.7 0 0 1 2.2500000000000004 10.450000000000001 L6.45 10.450000000000001 Z" fill="#d8fbff" stroke="#1f3fc4" stroke-width="1.1"/><path d="M8.05 15.25 A5.3 5.3 0 0 0 13.350000000000001 9.950000000000001 L8.05 9.950000000000001 Z" fill="url(#gqR)"/></svg>
<svg class="a" style="left:3px;top:427px" width="15" height="16" viewBox="0 0 15 16"><rect x="0.5" y="0.5" width="14" height="15" fill="#fff" stroke="#2f6fe0" stroke-width="1"/><rect x="1" y="1" width="13" height="2.3" fill="url(#gBlueBar)"/><path d="M6.95 3.55 A5.3 5.3 0 0 0 1.6500000000000004 8.85 L6.95 8.85 Z" fill="url(#gqB)"/><path d="M8.05 3.55 A5.3 5.3 0 0 1 13.350000000000001 8.85 L8.05 8.85 Z" fill="url(#gqO)"/><path d="M6.45 14.65 A4.7 4.7 0 0 1 2.2500000000000004 10.450000000000001 L6.45 10.450000000000001 Z" fill="#d8fbff" stroke="#1f3fc4" stroke-width="1.1"/><path d="M8.05 15.25 A5.3 5.3 0 0 0 13.350000000000001 9.950000000000001 L8.05 9.950000000000001 Z" fill="url(#gqR)"/></svg>
<svg class="a" style="left:3px;top:444px" width="15" height="16" viewBox="0 0 15 16"><rect x="0.5" y="0.5" width="14" height="15" fill="#fff" stroke="#2f6fe0" stroke-width="1"/><rect x="1" y="1" width="13" height="2.3" fill="url(#gBlueBar)"/><path d="M6.95 3.55 A5.3 5.3 0 0 0 1.6500000000000004 8.85 L6.95 8.85 Z" fill="url(#gqB)"/><path d="M8.05 3.55 A5.3 5.3 0 0 1 13.350000000000001 8.85 L8.05 8.85 Z" fill="url(#gqO)"/><path d="M6.45 14.65 A4.7 4.7 0 0 1 2.2500000000000004 10.450000000000001 L6.45 10.450000000000001 Z" fill="#d8fbff" stroke="#1f3fc4" stroke-width="1.1"/><path d="M8.05 15.25 A5.3 5.3 0 0 0 13.350000000000001 9.950000000000001 L8.05 9.950000000000001 Z" fill="url(#gqR)"/></svg>
<svg class="a" style="left:3px;top:461px" width="15" height="16" viewBox="0 0 15 16"><rect x="0.5" y="0.5" width="14" height="15" fill="#fff" stroke="#2f6fe0" stroke-width="1"/><rect x="1" y="1" width="13" height="2.3" fill="url(#gBlueBar)"/><path d="M6.95 3.55 A5.3 5.3 0 0 0 1.6500000000000004 8.85 L6.95 8.85 Z" fill="url(#gqB)"/><path d="M8.05 3.55 A5.3 5.3 0 0 1 13.350000000000001 8.85 L8.05 8.85 Z" fill="url(#gqO)"/><path d="M6.45 14.65 A4.7 4.7 0 0 1 2.2500000000000004 10.450000000000001 L6.45 10.450000000000001 Z" fill="#d8fbff" stroke="#1f3fc4" stroke-width="1.1"/><path d="M8.05 15.25 A5.3 5.3 0 0 0 13.350000000000001 9.950000000000001 L8.05 9.950000000000001 Z" fill="url(#gqR)"/></svg>
<svg class="a" style="left:3px;top:478px" width="15" height="16" viewBox="0 0 15 16"><rect x="0.5" y="0.5" width="14" height="15" fill="#fff" stroke="#2f6fe0" stroke-width="1"/><rect x="1" y="1" width="13" height="2.3" fill="url(#gBlueBar)"/><path d="M6.95 3.55 A5.3 5.3 0 0 0 1.6500000000000004 8.85 L6.95 8.85 Z" fill="url(#gqB)"/><path d="M8.05 3.55 A5.3 5.3 0 0 1 13.350000000000001 8.85 L8.05 8.85 Z" fill="url(#gqO)"/><path d="M6.45 14.65 A4.7 4.7 0 0 1 2.2500000000000004 10.450000000000001 L6.45 10.450000000000001 Z" fill="#d8fbff" stroke="#1f3fc4" stroke-width="1.1"/><path d="M8.05 15.25 A5.3 5.3 0 0 0 13.350000000000001 9.950000000000001 L8.05 9.950000000000001 Z" fill="url(#gqR)"/></svg>
<svg class="a" style="left:3px;top:495px" width="15" height="16" viewBox="0 0 15 16"><rect x="0.5" y="0.5" width="14" height="15" fill="#fff" stroke="#2f6fe0" stroke-width="1"/><rect x="1" y="1" width="13" height="2.3" fill="url(#gBlueBar)"/><path d="M6.95 3.55 A5.3 5.3 0 0 0 1.6500000000000004 8.85 L6.95 8.85 Z" fill="url(#gqB)"/><path d="M8.05 3.55 A5.3 5.3 0 0 1 13.350000000000001 8.85 L8.05 8.85 Z" fill="url(#gqO)"/><path d="M6.45 14.65 A4.7 4.7 0 0 1 2.2500000000000004 10.450000000000001 L6.45 10.450000000000001 Z" fill="#d8fbff" stroke="#1f3fc4" stroke-width="1.1"/><path d="M8.05 15.25 A5.3 5.3 0 0 0 13.350000000000001 9.950000000000001 L8.05 9.950000000000001 Z" fill="url(#gqR)"/></svg>
<svg class="a" style="left:3px;top:512px" width="15" height="16" viewBox="0 0 15 16"><rect x="0.5" y="0.5" width="14" height="15" fill="#fff" stroke="#2f6fe0" stroke-width="1"/><rect x="1" y="1" width="13" height="2.3" fill="url(#gBlueBar)"/><path d="M6.95 3.55 A5.3 5.3 0 0 0 1.6500000000000004 8.85 L6.95 8.85 Z" fill="url(#gqB)"/><path d="M8.05 3.55 A5.3 5.3 0 0 1 13.350000000000001 8.85 L8.05 8.85 Z" fill="url(#gqO)"/><path d="M6.45 14.65 A4.7 4.7 0 0 1 2.2500000000000004 10.450000000000001 L6.45 10.450000000000001 Z" fill="#d8fbff" stroke="#1f3fc4" stroke-width="1.1"/><path d="M8.05 15.25 A5.3 5.3 0 0 0 13.350000000000001 9.950000000000001 L8.05 9.950000000000001 Z" fill="url(#gqR)"/></svg>
<svg class="a" style="left:3px;top:529px" width="15" height="16" viewBox="0 0 15 16"><rect x="0.5" y="0.5" width="14" height="15" fill="#fff" stroke="#2f6fe0" stroke-width="1"/><rect x="1" y="1" width="13" height="2.3" fill="url(#gBlueBar)"/><path d="M6.95 3.55 A5.3 5.3 0 0 0 1.6500000000000004 8.85 L6.95 8.85 Z" fill="url(#gqB)"/><path d="M8.05 3.55 A5.3 5.3 0 0 1 13.350000000000001 8.85 L8.05 8.85 Z" fill="url(#gqO)"/><path d="M6.45 14.65 A4.7 4.7 0 0 1 2.2500000000000004 10.450000000000001 L6.45 10.450000000000001 Z" fill="#d8fbff" stroke="#1f3fc4" stroke-width="1.1"/><path d="M8.05 15.25 A5.3 5.3 0 0 0 13.350000000000001 9.950000000000001 L8.05 9.950000000000001 Z" fill="url(#gqR)"/></svg>
<svg class="a" style="left:3px;top:546px" width="15" height="16" viewBox="0 0 15 16"><rect x="0.5" y="0.5" width="14" height="15" fill="#fff" stroke="#2f6fe0" stroke-width="1"/><rect x="1" y="1" width="13" height="2.3" fill="url(#gBlueBar)"/><path d="M6.95 3.55 A5.3 5.3 0 0 0 1.6500000000000004 8.85 L6.95 8.85 Z" fill="url(#gqB)"/><path d="M8.05 3.55 A5.3 5.3 0 0 1 13.350000000000001 8.85 L8.05 8.85 Z" fill="url(#gqO)"/><path d="M6.45 14.65 A4.7 4.7 0 0 1 2.2500000000000004 10.450000000000001 L6.45 10.450000000000001 Z" fill="#d8fbff" stroke="#1f3fc4" stroke-width="1.1"/><path d="M8.05 15.25 A5.3 5.3 0 0 0 13.350000000000001 9.950000000000001 L8.05 9.950000000000001 Z" fill="url(#gqR)"/></svg>
<svg class="a" style="left:3px;top:563px" width="15" height="16" viewBox="0 0 15 16"><rect x="0.5" y="0.5" width="14" height="15" fill="#fff" stroke="#2f6fe0" stroke-width="1"/><rect x="1" y="1" width="13" height="2.3" fill="url(#gBlueBar)"/><path d="M6.95 3.55 A5.3 5.3 0 0 0 1.6500000000000004 8.85 L6.95 8.85 Z" fill="url(#gqB)"/><path d="M8.05 3.55 A5.3 5.3 0 0 1 13.350000000000001 8.85 L8.05 8.85 Z" fill="url(#gqO)"/><path d="M6.45 14.65 A4.7 4.7 0 0 1 2.2500000000000004 10.450000000000001 L6.45 10.450000000000001 Z" fill="#d8fbff" stroke="#1f3fc4" stroke-width="1.1"/><path d="M8.05 15.25 A5.3 5.3 0 0 0 13.350000000000001 9.950000000000001 L8.05 9.950000000000001 Z" fill="url(#gqR)"/></svg>
</div>
<div class="t" style="left:791.77px;top:170.67px;letter-spacing:0.972px;">Name</div>
<div class="t" style="left:967.18px;top:170.67px;letter-spacing:0.247px;">Start</div>
<div class="t" style="left:1061.97px;top:170.67px;letter-spacing:0.854px;">End</div>
<div class="t" style="left:1156.87px;top:170.67px;width:8px;overflow:hidden">R</div>
<div class="t" style="left:814.47px;top:188.67px;;letter-spacing:0.2px">ROM</div>
<div class="t" style="left:968.68px;top:188.67px;">00000000</div>
<div class="t" style="left:1063.48px;top:188.67px;">00300000</div>
<div class="t" style="left:1158.30px;top:188.67px;">?</div>
<div class="t" style="left:814.88px;top:205.67px;;letter-spacing:0.2px">SRAM1</div>
<div class="t" style="left:968.63px;top:205.67px;">60000000</div>
<div class="t" style="left:1063.43px;top:205.67px;">6001DFFF</div>
<div class="t" style="left:1158.30px;top:205.67px;">?</div>
<div class="t" style="left:814.88px;top:222.67px;;letter-spacing:0.2px">SRAM2</div>
<div class="t" style="left:968.63px;top:222.67px;">6001E000</div>
<div class="t" style="left:1063.43px;top:222.67px;">6001FFFF</div>
<div class="t" style="left:1158.30px;top:222.67px;">?</div>
<div class="t" style="left:814.88px;top:239.67px;;letter-spacing:0.2px">SRAM3</div>
<div class="t" style="left:968.63px;top:239.67px;">60100000</div>
<div class="t" style="left:1063.43px;top:239.67px;">60107FFF</div>
<div class="t" style="left:1158.30px;top:239.67px;">?</div>
<div class="t" style="left:814.88px;top:256.67px;;letter-spacing:0.2px">SRAM4</div>
<div class="t" style="left:968.63px;top:256.67px;">60108000</div>
<div class="t" style="left:1063.43px;top:256.67px;">6010BFFF</div>
<div class="t" style="left:1158.30px;top:256.67px;">?</div>
<div class="t" style="left:814.88px;top:273.67px;;letter-spacing:0.2px">SRAM5</div>
<div class="t" style="left:968.47px;top:273.67px;">70000000</div>
<div class="t" style="left:1063.27px;top:273.67px;">7001BFFF</div>
<div class="t" style="left:1158.30px;top:273.67px;">?</div>
<div class="t" style="left:814.88px;top:290.67px;color:#fff;letter-spacing:0.2px">SRAM6</div>
<div class="t" style="left:968.47px;top:290.67px;color:#fff">70100000</div>
<div class="t" style="left:1063.27px;top:290.67px;color:#fff">70105FFF</div>
<div class="t" style="left:1158.30px;top:290.67px;color:#fff">?</div>
<div class="t" style="left:814.88px;top:307.67px;color:#fff;letter-spacing:0.2px">SRAM7</div>
<div class="t" style="left:968.47px;top:307.67px;color:#fff">70106000</div>
<div class="t" style="left:1063.27px;top:307.67px;color:#fff">70107FFF</div>
<div class="t" style="left:1158.30px;top:307.67px;color:#fff">?</div>
<div class="t" style="left:814.88px;top:324.67px;color:#fff;letter-spacing:0.2px">STM0</div>
<div class="t" style="left:968.27px;top:324.67px;color:#fff">F0000000</div>
<div class="t" style="left:1063.07px;top:324.67px;color:#fff">F00000FF</div>
<div class="t" style="left:1158.30px;top:324.67px;color:#fff">?</div>
<div class="t" style="left:814.88px;top:341.67px;color:#fff;letter-spacing:0.2px">STM1</div>
<div class="t" style="left:968.27px;top:341.67px;color:#fff">F0000100</div>
<div class="t" style="left:1063.07px;top:341.67px;color:#fff">F00001FF</div>
<div class="t" style="left:1158.30px;top:341.67px;color:#fff">?</div>
<div class="t" style="left:814.88px;top:358.67px;color:#fff;letter-spacing:0.2px">STM2</div>
<div class="t" style="left:968.27px;top:358.67px;color:#fff">F0000200</div>
<div class="t" style="left:1063.07px;top:358.67px;color:#fff">F00002FF</div>
<div class="t" style="left:1158.30px;top:358.67px;color:#fff">?</div>
<div class="t" style="left:815.00px;top:375.67px;color:#fff;letter-spacing:0.2px">Cerberus</div>
<div class="t" style="left:968.27px;top:375.67px;color:#fff">F0000400</div>
<div class="t" style="left:1063.07px;top:375.67px;color:#fff">F00005FF</div>
<div class="t" style="left:1158.30px;top:375.67px;color:#fff">?</div>
<div class="t" style="left:815.60px;top:392.67px;color:#fff;letter-spacing:0.2px">ASCLIN0</div>
<div class="t" style="left:968.27px;top:392.67px;color:#fff">F0000600</div>
<div class="t" style="left:1063.07px;top:392.67px;color:#fff">F00006FF</div>
<div class="t" style="left:1158.30px;top:392.67px;color:#fff">?</div>
<div class="t" style="left:815.60px;top:409.67px;color:#fff;letter-spacing:0.2px">ASCLIN1</div>
<div class="t" style="left:968.27px;top:409.67px;color:#fff">F0000700</div>
<div class="t" style="left:1063.07px;top:409.67px;color:#fff">F00007FF</div>
<div class="t" style="left:1158.30px;top:409.67px;color:#fff">?</div>
<div class="t" style="left:815.60px;top:426.67px;color:#fff;letter-spacing:0.2px">ASCLIN2</div>
<div class="t" style="left:968.27px;top:426.67px;color:#fff">F0000800</div>
<div class="t" style="left:1063.07px;top:426.67px;color:#fff">F00008FF</div>
<div class="t" style="left:1158.30px;top:426.67px;color:#fff">?</div>
<div class="t" style="left:815.60px;top:443.67px;color:#fff;letter-spacing:0.2px">ASCLIN3</div>
<div class="t" style="left:968.27px;top:443.67px;color:#fff">F0000900</div>
<div class="t" style="left:1063.07px;top:443.67px;color:#fff">F00009FF</div>
<div class="t" style="left:1158.30px;top:443.67px;color:#fff">?</div>
<div class="t" style="left:815.00px;top:460.67px;color:#fff;letter-spacing:0.2px">QSPI0</div>
<div class="t" style="left:968.27px;top:460.67px;color:#fff">F0001C00</div>
<div class="t" style="left:1063.07px;top:460.67px;color:#fff">F0001CFF</div>
<div class="t" style="left:1158.30px;top:460.67px;color:#fff">?</div>
<div class="t" style="left:815.00px;top:477.67px;color:#fff;letter-spacing:0.2px">QSPI1</div>
<div class="t" style="left:968.27px;top:477.67px;color:#fff">F0001D00</div>
<div class="t" style="left:1063.07px;top:477.67px;color:#fff">F0001DFF</div>
<div class="t" style="left:1158.30px;top:477.67px;color:#fff">?</div>
<div class="t" style="left:815.00px;top:494.67px;color:#fff;letter-spacing:0.2px">QSPI2</div>
<div class="t" style="left:968.27px;top:494.67px;color:#fff">F0001E00</div>
<div class="t" style="left:1063.07px;top:494.67px;color:#fff">F0001EFF</div>
<div class="t" style="left:1158.30px;top:494.67px;color:#fff">?</div>
<div class="t" style="left:815.00px;top:511.67px;color:#fff;letter-spacing:0.2px">QSPI3</div>
<div class="t" style="left:968.27px;top:511.67px;color:#fff">F0001F00</div>
<div class="t" style="left:1063.07px;top:511.67px;color:#fff">F0001FFF</div>
<div class="t" style="left:1158.30px;top:511.67px;color:#fff">?</div>
<div class="t" style="left:814.47px;top:528.67px;color:#fff;letter-spacing:0.2px">MSC0</div>
<div class="t" style="left:968.27px;top:528.67px;color:#fff">F0002600</div>
<div class="t" style="left:1063.07px;top:528.67px;color:#fff">F00026FF</div>
<div class="t" style="left:1158.30px;top:528.67px;color:#fff">?</div>
<div class="t" style="left:814.47px;top:545.67px;;letter-spacing:0.2px">MSC1</div>
<div class="t" style="left:968.27px;top:545.67px;">F0002700</div>
<div class="t" style="left:1063.07px;top:545.67px;">F00027FF</div>
<div class="t" style="left:1158.30px;top:545.67px;">?</div>
<div class="t" style="left:815.00px;top:562.67px;;letter-spacing:0.2px">CCU60</div>
<div class="t" style="left:968.27px;top:562.67px;">F0002A00</div>
<div class="t" style="left:1063.07px;top:562.67px;">F0002AFF</div>
<div class="t" style="left:1158.30px;top:562.67px;">?</div>
<div class="t" style="left:815.00px;top:579.67px;;letter-spacing:0.2px">CCU61</div>
<div class="t" style="left:968.27px;top:579.67px;">F0002B00</div>
<div class="t" style="left:1063.07px;top:579.67px;">F0002BFF</div>
<div class="t" style="left:1158.30px;top:579.67px;">?</div>
<div class="t" style="left:815.00px;top:596.67px;;letter-spacing:0.2px">GPT120</div>
<div class="t" style="left:968.27px;top:596.67px;">F0002E00</div>
<div class="t" style="left:1063.07px;top:596.67px;">F0002EFF</div>
<div class="t" style="left:1158.30px;top:596.67px;">?</div>
<div class="t" style="left:814.88px;top:613.67px;;letter-spacing:0.2px">SENT</div>
<div class="t" style="left:968.27px;top:613.67px;">F0003000</div>
<div class="t" style="left:1063.07px;top:613.67px;">F0003AFF</div>
<div class="t" style="left:1158.30px;top:613.67px;">?</div>
<div class="t" style="left:814.47px;top:630.67px;;letter-spacing:0.2px">FCE</div>
<div class="t" style="left:968.27px;top:630.67px;">F0003F00</div>
<div class="t" style="left:1063.07px;top:630.67px;">F0003FFF</div>
<div class="t" style="left:1158.30px;top:630.67px;">?</div>
<div class="t" style="left:814.47px;top:647.67px;;letter-spacing:0.2px">PSI5</div>
<div class="t" style="left:968.27px;top:647.67px;">F0005000</div>
<div class="t" style="left:1063.07px;top:647.67px;">F0006FFF</div>
<div class="t" style="left:1158.30px;top:647.67px;">?</div>
<div class="t" style="left:814.47px;top:664.67px;;letter-spacing:0.2px">PSI5_S</div>
<div class="t" style="left:968.27px;top:664.67px;">F0007000</div>
<div class="t" style="left:1063.07px;top:664.67px;">F0007FFF</div>
<div class="t" style="left:1158.30px;top:664.67px;">?</div>
<div class="t" style="left:814.47px;top:681.67px;;letter-spacing:0.2px">DMA</div>
<div class="t" style="left:968.27px;top:681.67px;">F0010000</div>
<div class="t" style="left:1063.07px;top:681.67px;">F0013FFF</div>
<div class="t" style="left:1158.30px;top:681.67px;">?</div>
<div class="t" style="left:815.00px;top:698.67px;;letter-spacing:0.2px">CAN</div>
<div class="t" style="left:968.27px;top:698.67px;">F0018000</div>
<div class="t" style="left:1063.07px;top:698.67px;">F001BFFF</div>
<div class="t" style="left:1158.30px;top:698.67px;">?</div>
<div class="t" style="left:814.47px;top:715.67px;;letter-spacing:0.2px">ERAY</div>
<div class="t" style="left:968.27px;top:715.67px;">F001C000</div>
<div class="t" style="left:1063.07px;top:715.67px;">F001CFFF</div>
<div class="t" style="left:1158.30px;top:715.67px;">?</div>
<div class="t" style="left:814.47px;top:732.67px;;letter-spacing:0.2px">ETHCTL</div>
<div class="t" style="left:968.27px;top:732.67px;">F001D000</div>
<div class="t" style="left:1063.07px;top:732.67px;">F001D0FF</div>
<div class="t" style="left:1158.30px;top:732.67px;">?</div>
<div class="a" style="left:790px;top:743px;width:389px;height:14px;background:#efefef"></div>
<div class="sb" style="left:1165px;top:169px;width:14px;height:574px;border-left:1px solid #c6c6c6"></div>
<div class="sbb" style="left:1165px;top:169px;width:14px;height:14px"></div>
<svg class="a" style="left:1168.2px;top:173.6px" width="8" height="4" viewBox="0 0 8 4"><path d="M0 4 L8 4 L4 0 Z" fill="#555"/></svg>
<div class="sbb" style="left:1165px;top:729px;width:14px;height:14px"></div>
<svg class="a" style="left:1168.2px;top:734.4px" width="8" height="4" viewBox="0 0 8 4"><path d="M0 0 L8 0 L4 4 Z" fill="#555"/></svg>
<div class="thv" style="left:1165px;top:182px;width:14px;height:226px"></div>
<div class="sb" style="left:790px;top:743px;width:375px;height:14px;border-top:1px solid #c6c6c6"></div>
<div class="sbb" style="left:790px;top:743px;width:14px;height:14px"></div>
<svg class="a" style="left:794.6px;top:746.2px" width="4" height="8" viewBox="0 0 4 8"><path d="M4 0 L4 8 L0 4 Z" fill="#555"/></svg>
<div class="sbb" style="left:1151px;top:743px;width:14px;height:14px"></div>
<svg class="a" style="left:1156.4px;top:746.2px" width="4" height="8" viewBox="0 0 4 8"><path d="M0 0 L0 8 L4 4 Z" fill="#555"/></svg>
<div class="thh" style="left:804px;top:743px;width:142px;height:14px"></div>
<div class="t" style="left:794.57px;top:760.67px;letter-spacing:0.129px;">Line 21 of 78</div>
<svg class="a" style="left:1167.5px;top:787.5px" width="11" height="11" viewBox="0 0 11 11"><rect x="9" y="0" width="1.4" height="1.4" fill="#c6c6c6"/><rect x="9" y="3" width="1.4" height="1.4" fill="#c6c6c6"/><rect x="6" y="3" width="1.4" height="1.4" fill="#c6c6c6"/><rect x="9" y="6" width="1.4" height="1.4" fill="#c6c6c6"/><rect x="6" y="6" width="1.4" height="1.4" fill="#c6c6c6"/><rect x="3" y="6" width="1.4" height="1.4" fill="#c6c6c6"/><rect x="9" y="9" width="1.4" height="1.4" fill="#c6c6c6"/><rect x="6" y="9" width="1.4" height="1.4" fill="#c6c6c6"/><rect x="3" y="9" width="1.4" height="1.4" fill="#c6c6c6"/><rect x="0" y="9" width="1.4" height="1.4" fill="#c6c6c6"/></svg>
<svg class="a" style="left:143px;top:450px" width="2" height="17" viewBox="0 0 2 17"><rect x="0" y="0" width="1.2" height="1.2" fill="#bdbdbd"/><rect x="0" y="3" width="1.2" height="1.2" fill="#bdbdbd"/><rect x="0" y="6" width="1.2" height="1.2" fill="#bdbdbd"/><rect x="0" y="9" width="1.2" height="1.2" fill="#bdbdbd"/><rect x="0" y="12" width="1.2" height="1.2" fill="#bdbdbd"/><rect x="0" y="15" width="1.2" height="1.2" fill="#bdbdbd"/></svg>
<svg class="a" style="left:222px;top:466px" width="2" height="17" viewBox="0 0 2 17"><rect x="0" y="0" width="1.2" height="1.2" fill="#bdbdbd"/><rect x="0" y="3" width="1.2" height="1.2" fill="#bdbdbd"/><rect x="0" y="6" width="1.2" height="1.2" fill="#bdbdbd"/><rect x="0" y="9" width="1.2" height="1.2" fill="#bdbdbd"/><rect x="0" y="12" width="1.2" height="1.2" fill="#bdbdbd"/><rect x="0" y="15" width="1.2" height="1.2" fill="#bdbdbd"/></svg>
<svg class="a" style="left:787px;top:450px" width="2" height="17" viewBox="0 0 2 17"><rect x="0" y="0" width="1.2" height="1.2" fill="#bdbdbd"/><rect x="0" y="3" width="1.2" height="1.2" fill="#bdbdbd"/><rect x="0" y="6" width="1.2" height="1.2" fill="#bdbdbd"/><rect x="0" y="9" width="1.2" height="1.2" fill="#bdbdbd"/><rect x="0" y="12" width="1.2" height="1.2" fill="#bdbdbd"/><rect x="0" y="15" width="1.2" height="1.2" fill="#bdbdbd"/></svg>
<svg class="a" style="left:583px;top:100px" width="17" height="2" viewBox="0 0 17 2"><rect x="0" y="0" width="1.2" height="1.2" fill="#c2c2c2"/><rect x="3" y="0" width="1.2" height="1.2" fill="#c2c2c2"/><rect x="6" y="0" width="1.2" height="1.2" fill="#c2c2c2"/><rect x="9" y="0" width="1.2" height="1.2" fill="#c2c2c2"/><rect x="12" y="0" width="1.2" height="1.2" fill="#c2c2c2"/><rect x="15" y="0" width="1.2" height="1.2" fill="#c2c2c2"/></svg>
<div class="t m" style="left:1.6px;top:783.2px;color:#3a3a3a;font-size:11.5px;transform-origin:0 0;transform:scaleX(1.1594)">AU:  idle</div>
<div class="t m" style="left:95.3px;top:783.2px;color:#3a3a3a;font-size:11.5px;transform-origin:0 0;transform:scaleX(1.1594)">Down</div>
<div class="t m" style="left:171.5px;top:783.2px;color:#3a3a3a;font-size:11.5px;transform-origin:0 0;transform:scaleX(1.1594)">Disk: 7GB</div>
</div></body></html>
